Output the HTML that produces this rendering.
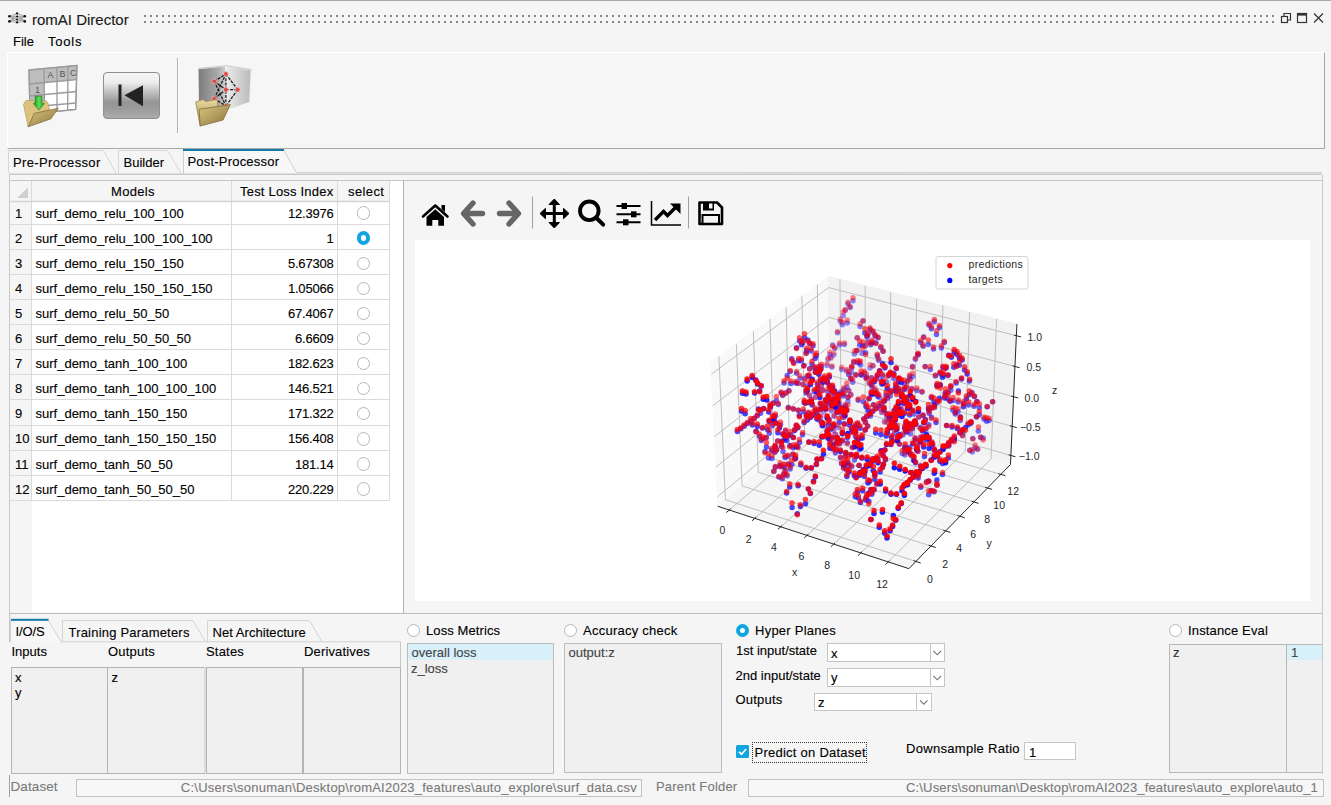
<!DOCTYPE html>
<html><head><meta charset="utf-8">
<style>
*{box-sizing:border-box;margin:0;padding:0}
html,body{width:1331px;height:805px;overflow:hidden;background:#f5f5f5;font-family:"Liberation Sans",sans-serif;font-size:13px;color:#000}
.t{-webkit-text-stroke:0.12px currentColor}
.a{position:absolute}
.t{position:absolute;white-space:nowrap;line-height:13px;font-size:13px}
.g{color:#777}
.hl{position:absolute;height:1px}
.vl{position:absolute;width:1px}
.radio{position:absolute;width:13.4px;height:13.4px;border-radius:50%;border:1.5px solid #b0b8c1;background:#fff}
.radio.on{border:4.4px solid #10a5e1;background:#fff}
.lb{position:absolute;background:#f0f0f0;border:1px solid #b4b4b4}
.cb{position:absolute;background:#fff;border:1px solid #c5c5c5}
.cbb{position:absolute;background:#fff;border:1px solid #c5c5c5}
</style></head><body>
<!-- top border -->
<div class="hl" style="left:0;top:0;width:1331px;background:#a8a8a8"></div>
<!-- title icon -->
<svg class="a" style="left:6px;top:11px" width="22" height="14" viewBox="6 11 22 14">
 <g stroke="#666" stroke-width="0.5" fill="none">
  <path d="M9.4 16.2 L17.1 13.3 M9.4 16.2 L17.1 16.5 M9.4 16.2 L17.1 19.5 M9.4 16.2 L17.1 22.5 M9.4 21.4 L17.1 13.3 M9.4 21.4 L17.1 16.5 M9.4 21.4 L17.1 19.5 M9.4 21.4 L17.1 22.5 M24.8 16.2 L17.1 13.3 M24.8 16.2 L17.1 16.5 M24.8 16.2 L17.1 19.5 M24.8 16.2 L17.1 22.5 M24.8 21.4 L17.1 13.3 M24.8 21.4 L17.1 16.5 M24.8 21.4 L17.1 19.5 M24.8 21.4 L17.1 22.5"/>
 </g>
 <g fill="#111"><circle cx="9.4" cy="16.2" r="1.3"/><circle cx="9.4" cy="21.4" r="1.3"/><circle cx="24.8" cy="16.2" r="1.3"/><circle cx="24.8" cy="21.4" r="1.3"/><circle cx="17.1" cy="13.4" r="1.1"/><circle cx="17.1" cy="16.5" r="1.1"/><circle cx="17.1" cy="19.5" r="1.1"/><circle cx="17.1" cy="22.4" r="1.1"/></g>
</svg>
<div class="t" style="left:32px;top:12px;font-size:15px;line-height:15px;color:#1a1a1a">romAI Director</div>
<!-- dotted grip -->
<div class="a" style="left:144px;top:15px;width:1134px;height:8px;background-image:linear-gradient(#858585,#858585),linear-gradient(#858585,#858585);background-size:6px 2px,6px 2px;background-repeat:repeat-x;background-position:0 0,0 6px;"></div>
<div class="a" style="left:144px;top:15px;width:1134px;height:8px;background-image:linear-gradient(90deg,#f5f5f5 0,#f5f5f5 0px,transparent 0px,transparent 2px,#f5f5f5 2px);background-size:6px 8px;"></div>
<!-- window buttons -->
<svg class="a" style="left:1279px;top:12px" width="46" height="12" viewBox="0 0 46 12">
 <g fill="none" stroke="#333" stroke-width="1.2">
  <rect x="2.5" y="4.5" width="6" height="6"/><path d="M5 4.5 V1.5 H11.5 V8 H8.5"/>
  <rect x="18.5" y="1.5" width="9" height="9"/><path d="M18.5 2.6 H27.5" stroke-width="2"/>
  <path d="M35 1.5 L44 10.5 M44 1.5 L35 10.5"/>
 </g>
</svg>
<!-- menu -->
<div class="t" style="left:13px;top:35px">File</div>
<div class="t" style="left:48px;top:35px;letter-spacing:0.8px">Tools</div>
<!-- toolbar box -->
<div class="a" style="left:7px;top:52px;width:1318px;height:97px;background:#f6f6f6;border-top:1px solid #fff;border-left:1px solid #fff;border-right:1px solid #a8a8a8;border-bottom:1px solid #a8a8a8"></div>
<!-- toolbar icon 1: spreadsheet -->
<svg class="a" style="left:20px;top:60px" width="62" height="72" viewBox="0 0 62 72">
 <defs>
  <linearGradient id="fold1" x1="0" y1="0" x2="0" y2="1"><stop offset="0" stop-color="#e9d9a0"/><stop offset="1" stop-color="#a08848"/></linearGradient>
  <linearGradient id="fold2" x1="0" y1="0" x2="1" y2="1"><stop offset="0" stop-color="#d9c584"/><stop offset="1" stop-color="#8d7538"/></linearGradient>
  <linearGradient id="grn" x1="0" y1="0" x2="1" y2="0"><stop offset="0" stop-color="#0a8a0a"/><stop offset="0.5" stop-color="#5de05d"/><stop offset="1" stop-color="#1a9a1a"/></linearGradient>
 </defs>
 <path d="M9 10 L57 5.5 L55.6 49.5 L10 54 Z" fill="#fff" stroke="#9a9a9a" stroke-width="1.2"/>
 <path d="M9 10 L57 5.5 L57 19 L9 24 Z" fill="#bdbdbd"/>
 <path d="M9 10 L24 8.6 L24.5 54 L10 54 Z" fill="#bdbdbd"/>
 <g stroke="#9a9a9a" stroke-width="1.3" fill="none">
  <path d="M9 10 L57 5.5 L55.6 49.5 L10 54 Z"/>
  <path d="M9 24 L57 19.5 M9.5 36 L56.5 31.5 M9.8 47 L56 43"/>
  <path d="M24 8.6 L24.5 53 M37 7.4 L37 52 M48 6.3 L47.6 51"/>
 </g>
 <g fill="#555" font-family="Liberation Sans" font-size="9"><text x="27.5" y="18">A</text><text x="39.5" y="17">B</text><text x="50" y="16">C</text><text x="15" y="33">1</text></g>
 <path d="M3.5 44.4 L6 40.5 L13 40.3 L15 42 L26 40.8 L28 43 L29.5 50 L14.4 53.4 L8.2 66.8 Z" fill="#dcc27e" stroke="#b39a5a" stroke-width="0.7"/>
 <path d="M15.2 36.2 H21.9 V43.4 H24.4 L18.9 50.1 L13.4 43.4 H15.2 Z" fill="url(#grn)" stroke="#0d7a0d" stroke-width="0.6"/>
 <path d="M14.4 53.4 L38.3 48.2 L30.8 58.9 L8.2 66.8 Z" fill="url(#fold2)" stroke="#7f6a35" stroke-width="0.7"/>
</svg>
<!-- toolbar icon 2: button -->
<div class="a" style="left:102.5px;top:71.5px;width:57px;height:47.5px;border:1px solid #8e8e8e;border-radius:4px;background:linear-gradient(#f6f6f6 0%,#eeeeee 20%,#bcbcbc 45%,#959595 65%,#9c9c9c 80%,#acacac 100%)"></div>
<svg class="a" style="left:102px;top:72px" width="58" height="48" viewBox="0 0 58 48">
 <rect x="16.5" y="12.5" width="3" height="21.5" fill="#222"/>
 <path d="M22.5 23.3 L41 13.3 L41 34.2 Z" fill="#222"/>
</svg>
<!-- separator -->
<div class="vl" style="left:177px;top:58px;height:75px;background:#b0b0b0"></div>
<div class="vl" style="left:178px;top:58px;height:75px;background:#fff"></div>
<!-- toolbar icon 3: cube -->
<svg class="a" style="left:190px;top:58px" width="70" height="72" viewBox="0 0 70 72">
 <defs>
  <linearGradient id="cubeL" x1="0" y1="0" x2="1" y2="0"><stop offset="0" stop-color="#7c7c7c"/><stop offset="0.7" stop-color="#a9a9a9"/><stop offset="1" stop-color="#d0d0d0"/></linearGradient>
  <linearGradient id="cubeR" x1="0" y1="0" x2="1" y2="0"><stop offset="0" stop-color="#ececec"/><stop offset="1" stop-color="#b9b9b9"/></linearGradient>
 </defs>
 <path d="M8.5 10.5 L35.9 7.7 L35.9 53 L9 46 Z" fill="url(#cubeL)"/>
 <path d="M35.9 7.7 L61.7 11.6 L60 44.6 L35.9 53 Z" fill="url(#cubeR)"/>
 <path d="M8.5 10.5 L35.9 7.7 L61.7 11.6 M35.9 8 V53 M61.5 11.6 L60 44.6 L35.9 53" fill="none" stroke="#f4f4f4" stroke-width="1.6"/>
 <path d="M8.5 10.5 L35.9 7.7 L61.7 11.6" fill="none" stroke="#bdbdbd" stroke-width="0.8"/>
 <g stroke="#1a1a1a" stroke-width="1.3" fill="none" stroke-dasharray="3 1.2">
  <path d="M24.2 23.3 L35.9 16 M35.9 16 L35.9 47.9 M35.9 31.7 L47.7 31.7 M35.9 16 L47.7 31.7 M47.7 31.7 L35.9 47.9 M24.2 23.3 L35.9 47.9 M24.2 23.3 L35.9 31.7 M24.2 40.7 L35.9 16 M24.2 40.7 L35.9 31.7 M24.2 40.7 L35.9 47.9"/>
 </g>
 <g fill="#e04848" stroke="#f6d0d0" stroke-width="0.6"><circle cx="35.9" cy="16" r="2.4"/><circle cx="24.2" cy="23.3" r="2.4"/><circle cx="35.9" cy="31.7" r="2.4"/><circle cx="47.7" cy="31.7" r="2.4"/><circle cx="24.2" cy="40.7" r="2.4"/><circle cx="35.9" cy="47.9" r="2.4"/></g>
 <path d="M5.7 44 L13 41.5 L15.5 43.5 L27 41.5 L29 54 L10.2 68 Z" fill="url(#fold1)" stroke="#9b8245" stroke-width="0.8"/>
 <path d="M9.1 51.3 L40.4 46.5 L33 62 L10.2 68 Z" fill="url(#fold2)" stroke="#7f6a35" stroke-width="0.8"/>
</svg>
<!-- top tabs -->
<svg class="a" style="left:0;top:140px" width="1331" height="45" viewBox="0 140 1331 45">
 <path d="M8.5 173 V150.5 H103.5 L116 173" fill="#f5f5f5" stroke="#d6d6d6" stroke-width="1"/>
 <path d="M118.5 173 V150.5 H167.5 L181 173" fill="#f5f5f5" stroke="#d6d6d6" stroke-width="1"/>
 <path d="M183.5 174 V150 H283.5 L296.5 172.5 H1322" fill="#f7f7f7" stroke="#d0d0d0" stroke-width="1"/>
 <rect x="183" y="149" width="101" height="2" fill="#117aa6"/>
 <rect x="9" y="173.5" width="1313" height="1.5" fill="#c9c9c9"/>
</svg>
<div class="t" style="left:13px;top:156px;letter-spacing:0.35px">Pre-Processor</div>
<div class="t" style="left:123.5px;top:156px">Builder</div>
<div class="t" style="left:187.5px;top:155px;letter-spacing:0.2px">Post-Processor</div>
<!-- main frame -->
<div class="a" style="left:9px;top:175px;width:1314px;height:439px;border-left:1px solid #c8c8c8;border-right:1px solid #c8c8c8;border-bottom:1.5px solid #bdbdbd"></div>
<div class="hl" style="left:9px;top:180px;width:1313px;background:#c6c6c6"></div>
<!-- table -->
<div class="a" style="left:10px;top:181px;width:393px;height:431px;background:#fff"></div>
<div class="a" style="left:10px;top:181px;width:22px;height:431px;background:#f5f5f5"></div>
<div class="a" style="left:10px;top:181px;width:380px;height:21px;background:#f5f5f5"></div>
<div class="vl" style="left:402.5px;top:180px;height:433px;width:1.5px;background:#b2b2b2"></div>
<svg class="a" style="left:0;top:180px" width="404" height="330" viewBox="0 180 404 330">
 <g stroke="#dadada" stroke-width="1" fill="none">
  <path d="M31.5 181 V501 M231.5 181 V501 M337.5 181 V501 M389.5 181 V501"/>
  <path d="M10 201.5 H390" stroke-width="1.6" stroke="#d4d4d4"/>
  <path d="M10 224.5 H390 M10 249.5 H390 M10 274.5 H390 M10 299.5 H390 M10 324.5 H390 M10 349.5 H390 M10 374.5 H390 M10 399.5 H390 M10 425.5 H390 M10 450.5 H390 M10 475.5 H390 M10 500.5 H390"/>
 </g>
 <path d="M17 198 L28 187.5 L28 198 Z" fill="#cfcfcf"/>
</svg>
<div class="t" style="left:111px;top:185px;letter-spacing:0.3px">Models</div>
<div class="t" style="left:240px;top:185px;letter-spacing:0.2px">Test Loss Index</div>
<div class="t" style="left:348px;top:185px;letter-spacing:0.4px">select</div>
<div class="t" style="left:15px;top:206.5px">1</div>
<div class="t" style="left:35.5px;top:206.5px">surf_demo_relu_100_100</div>
<div class="t" style="left:233px;top:206.5px;width:100.5px;text-align:right;letter-spacing:-0.2px">12.3976</div>
<div class="radio" style="left:356.5px;top:206.3px"></div>
<div class="t" style="left:15px;top:231.6px">2</div>
<div class="t" style="left:35.5px;top:231.6px">surf_demo_relu_100_100_100</div>
<div class="t" style="left:233px;top:231.6px;width:100.5px;text-align:right;letter-spacing:-0.2px">1</div>
<div class="radio on" style="left:356.5px;top:231.4px"></div>
<div class="t" style="left:15px;top:256.7px">3</div>
<div class="t" style="left:35.5px;top:256.7px">surf_demo_relu_150_150</div>
<div class="t" style="left:233px;top:256.7px;width:100.5px;text-align:right;letter-spacing:-0.2px">5.67308</div>
<div class="radio" style="left:356.5px;top:256.5px"></div>
<div class="t" style="left:15px;top:281.8px">4</div>
<div class="t" style="left:35.5px;top:281.8px">surf_demo_relu_150_150_150</div>
<div class="t" style="left:233px;top:281.8px;width:100.5px;text-align:right;letter-spacing:-0.2px">1.05066</div>
<div class="radio" style="left:356.5px;top:281.6px"></div>
<div class="t" style="left:15px;top:306.9px">5</div>
<div class="t" style="left:35.5px;top:306.9px">surf_demo_relu_50_50</div>
<div class="t" style="left:233px;top:306.9px;width:100.5px;text-align:right;letter-spacing:-0.2px">67.4067</div>
<div class="radio" style="left:356.5px;top:306.7px"></div>
<div class="t" style="left:15px;top:332.0px">6</div>
<div class="t" style="left:35.5px;top:332.0px">surf_demo_relu_50_50_50</div>
<div class="t" style="left:233px;top:332.0px;width:100.5px;text-align:right;letter-spacing:-0.2px">6.6609</div>
<div class="radio" style="left:356.5px;top:331.8px"></div>
<div class="t" style="left:15px;top:357.1px">7</div>
<div class="t" style="left:35.5px;top:357.1px">surf_demo_tanh_100_100</div>
<div class="t" style="left:233px;top:357.1px;width:100.5px;text-align:right;letter-spacing:-0.2px">182.623</div>
<div class="radio" style="left:356.5px;top:356.9px"></div>
<div class="t" style="left:15px;top:382.2px">8</div>
<div class="t" style="left:35.5px;top:382.2px">surf_demo_tanh_100_100_100</div>
<div class="t" style="left:233px;top:382.2px;width:100.5px;text-align:right;letter-spacing:-0.2px">146.521</div>
<div class="radio" style="left:356.5px;top:382.0px"></div>
<div class="t" style="left:15px;top:407.3px">9</div>
<div class="t" style="left:35.5px;top:407.3px">surf_demo_tanh_150_150</div>
<div class="t" style="left:233px;top:407.3px;width:100.5px;text-align:right;letter-spacing:-0.2px">171.322</div>
<div class="radio" style="left:356.5px;top:407.1px"></div>
<div class="t" style="left:15px;top:432.4px">10</div>
<div class="t" style="left:35.5px;top:432.4px">surf_demo_tanh_150_150_150</div>
<div class="t" style="left:233px;top:432.4px;width:100.5px;text-align:right;letter-spacing:-0.2px">156.408</div>
<div class="radio" style="left:356.5px;top:432.2px"></div>
<div class="t" style="left:15px;top:457.5px">11</div>
<div class="t" style="left:35.5px;top:457.5px">surf_demo_tanh_50_50</div>
<div class="t" style="left:233px;top:457.5px;width:100.5px;text-align:right;letter-spacing:-0.2px">181.14</div>
<div class="radio" style="left:356.5px;top:457.3px"></div>
<div class="t" style="left:15px;top:482.6px">12</div>
<div class="t" style="left:35.5px;top:482.6px">surf_demo_tanh_50_50_50</div>
<div class="t" style="left:233px;top:482.6px;width:100.5px;text-align:right;letter-spacing:-0.2px">220.229</div>
<div class="radio" style="left:356.5px;top:482.4px"></div>
<!-- plot toolbar -->
<svg class="a" style="left:410px;top:190px" width="330" height="45" viewBox="410 190 330 45">
 <!-- home -->
 <path d="M423 216.5 L435.3 205.5 L447.5 216.5" fill="none" stroke="#000" stroke-width="2.6" stroke-linecap="round" stroke-linejoin="round"/>
 <path d="M441.5 205 H445 V212 L441.5 209 Z" fill="#000"/>
 <path d="M426.5 217 L435.3 209.3 L444 217 V225.8 H438.3 V220 H432.3 V225.8 H426.5 Z" fill="#000"/>
 <!-- back -->
 <path d="M473 203 L463.5 213.5 L473 224 M464.5 213.5 H482.5" fill="none" stroke="#666" stroke-width="5.4" stroke-linecap="round" stroke-linejoin="round"/>
 <!-- forward -->
 <path d="M509 203 L518.5 213.5 L509 224 M517.5 213.5 H499.5" fill="none" stroke="#666" stroke-width="5.4" stroke-linecap="round" stroke-linejoin="round"/>
 <rect x="532" y="196.5" width="1" height="32" fill="#a0a0a0"/>
 <!-- move -->
 <path d="M554.3 203 V225 M543 213.5 H566" stroke="#000" stroke-width="3" fill="none"/>
 <path d="M554.3 199 L559.5 204.5 H549 Z M554.3 228 L559.5 222.5 H549 Z M540 213.5 L545.5 208.3 V218.7 Z M569 213.5 L563.5 208.3 V218.7 Z" fill="#000" stroke="#000" stroke-width="1" stroke-linejoin="round"/>
 <!-- zoom -->
 <circle cx="589.3" cy="210.8" r="9.3" fill="none" stroke="#000" stroke-width="3.9"/>
 <path d="M596.5 218 L603.2 224.7" stroke="#000" stroke-width="4" stroke-linecap="round"/>
 <!-- sliders -->
 <path d="M616.5 206 H640.5 M616.5 214.3 H640.5 M616.5 222.3 H640.5" stroke="#000" stroke-width="2.1"/>
 <rect x="621.5" y="203" width="5.5" height="6" fill="#000"/>
 <rect x="631" y="211.3" width="5.5" height="6" fill="#000"/>
 <rect x="623" y="219.3" width="5.5" height="6" fill="#000"/>
 <!-- chart -->
 <path d="M651.5 201 V225 H681" fill="none" stroke="#000" stroke-width="1.5"/>
 <path d="M655 220 L663.5 211.5 L667.5 215.5 L677 206" fill="none" stroke="#000" stroke-width="3.4" stroke-linejoin="miter"/>
 <path d="M670 203.5 H680.5 V214 Z" fill="#000"/>
 <rect x="688" y="196.5" width="1" height="32" fill="#a0a0a0"/>
 <!-- save -->
 <path d="M699.5 202.5 H717 L722 207.5 V224 H699.5 Z" fill="none" stroke="#000" stroke-width="2.6" stroke-linejoin="round"/>
 <rect x="703" y="202" width="11" height="8.5" fill="#000"/>
 <rect x="709" y="203.5" width="3.5" height="5" fill="#f5f5f5"/>
 <rect x="702.5" y="215" width="16.5" height="9" fill="none" stroke="#000" stroke-width="2"/>
</svg>
<!-- canvas -->
<div class="a" style="left:415px;top:240px;width:895px;height:361px;background:#fff"></div>
<svg class="a" style="left:415px;top:240px" width="895" height="361" viewBox="415 240 895 361"><g font-family="Liberation Sans" font-size="10.5" fill="#262626"><polygon points="717.68,506.25 830.09,412.11 828.53,276.34 710.74,362.22" fill="#f9f9f9" stroke="#f9f9f9" stroke-width="1"/>
<polygon points="830.09,412.11 1010.46,464.49 1016.90,324.05 828.53,276.34" fill="#f2f2f2" stroke="#f2f2f2" stroke-width="1"/>
<polygon points="717.68,506.25 908.89,568.65 1010.46,464.49 830.09,412.11" fill="#f5f5f5" stroke="#f5f5f5" stroke-width="1"/>
<line x1="729.26" y1="510.03" x2="841.06" y2="415.30" stroke="#bcbcbc" stroke-width="0.95"/>
<line x1="841.06" y1="415.30" x2="839.96" y2="279.24" stroke="#bcbcbc" stroke-width="0.95"/>
<line x1="725.43" y1="499.76" x2="915.92" y2="561.44" stroke="#bcbcbc" stroke-width="0.95"/>
<line x1="725.43" y1="499.76" x2="718.88" y2="356.28" stroke="#bcbcbc" stroke-width="0.95"/>
<line x1="754.80" y1="518.37" x2="865.23" y2="422.32" stroke="#bcbcbc" stroke-width="0.95"/>
<line x1="865.23" y1="422.32" x2="865.17" y2="285.62" stroke="#bcbcbc" stroke-width="0.95"/>
<line x1="742.03" y1="485.86" x2="930.97" y2="546.00" stroke="#bcbcbc" stroke-width="0.95"/>
<line x1="742.03" y1="485.86" x2="736.33" y2="343.56" stroke="#bcbcbc" stroke-width="0.95"/>
<line x1="780.72" y1="526.82" x2="889.73" y2="429.43" stroke="#bcbcbc" stroke-width="0.95"/>
<line x1="889.73" y1="429.43" x2="890.73" y2="292.09" stroke="#bcbcbc" stroke-width="0.95"/>
<line x1="758.24" y1="472.28" x2="945.64" y2="530.96" stroke="#bcbcbc" stroke-width="0.95"/>
<line x1="758.24" y1="472.28" x2="753.35" y2="331.16" stroke="#bcbcbc" stroke-width="0.95"/>
<line x1="807.01" y1="535.40" x2="914.56" y2="436.64" stroke="#bcbcbc" stroke-width="0.95"/>
<line x1="914.56" y1="436.64" x2="916.64" y2="298.66" stroke="#bcbcbc" stroke-width="0.95"/>
<line x1="774.07" y1="459.03" x2="959.95" y2="516.28" stroke="#bcbcbc" stroke-width="0.95"/>
<line x1="774.07" y1="459.03" x2="769.94" y2="319.06" stroke="#bcbcbc" stroke-width="0.95"/>
<line x1="833.69" y1="544.11" x2="939.72" y2="443.95" stroke="#bcbcbc" stroke-width="0.95"/>
<line x1="939.72" y1="443.95" x2="942.92" y2="305.31" stroke="#bcbcbc" stroke-width="0.95"/>
<line x1="789.52" y1="446.08" x2="973.91" y2="501.97" stroke="#bcbcbc" stroke-width="0.95"/>
<line x1="789.52" y1="446.08" x2="786.12" y2="307.26" stroke="#bcbcbc" stroke-width="0.95"/>
<line x1="860.77" y1="552.94" x2="965.22" y2="451.35" stroke="#bcbcbc" stroke-width="0.95"/>
<line x1="965.22" y1="451.35" x2="969.57" y2="312.06" stroke="#bcbcbc" stroke-width="0.95"/>
<line x1="804.62" y1="433.44" x2="987.53" y2="488.01" stroke="#bcbcbc" stroke-width="0.95"/>
<line x1="804.62" y1="433.44" x2="801.92" y2="295.74" stroke="#bcbcbc" stroke-width="0.95"/>
<line x1="888.25" y1="561.91" x2="991.07" y2="458.86" stroke="#bcbcbc" stroke-width="0.95"/>
<line x1="991.07" y1="458.86" x2="996.61" y2="318.91" stroke="#bcbcbc" stroke-width="0.95"/>
<line x1="819.37" y1="421.09" x2="1000.82" y2="474.38" stroke="#bcbcbc" stroke-width="0.95"/>
<line x1="819.37" y1="421.09" x2="817.33" y2="284.50" stroke="#bcbcbc" stroke-width="0.95"/>
<line x1="717.24" y1="497.01" x2="829.99" y2="403.37" stroke="#bcbcbc" stroke-width="0.95"/>
<line x1="829.99" y1="403.37" x2="1010.88" y2="455.47" stroke="#bcbcbc" stroke-width="0.95"/>
<line x1="715.80" y1="467.19" x2="829.66" y2="375.19" stroke="#bcbcbc" stroke-width="0.95"/>
<line x1="829.66" y1="375.19" x2="1012.21" y2="426.36" stroke="#bcbcbc" stroke-width="0.95"/>
<line x1="714.33" y1="436.80" x2="829.33" y2="346.51" stroke="#bcbcbc" stroke-width="0.95"/>
<line x1="829.33" y1="346.51" x2="1013.57" y2="396.71" stroke="#bcbcbc" stroke-width="0.95"/>
<line x1="712.84" y1="405.80" x2="829.00" y2="317.31" stroke="#bcbcbc" stroke-width="0.95"/>
<line x1="829.00" y1="317.31" x2="1014.96" y2="366.49" stroke="#bcbcbc" stroke-width="0.95"/>
<line x1="711.32" y1="374.20" x2="828.66" y2="287.59" stroke="#bcbcbc" stroke-width="0.95"/>
<line x1="828.66" y1="287.59" x2="1016.37" y2="335.71" stroke="#bcbcbc" stroke-width="0.95"/>
<line x1="717.68" y1="506.25" x2="908.89" y2="568.65" stroke="#262626" stroke-width="1.0"/>
<line x1="908.89" y1="568.65" x2="1010.46" y2="464.49" stroke="#262626" stroke-width="1.0"/>
<line x1="1010.46" y1="464.49" x2="1016.90" y2="324.05" stroke="#262626" stroke-width="1.0"/>
<line x1="730.72" y1="508.79" x2="726.33" y2="512.51" stroke="#262626" stroke-width="1.0"/>
<line x1="913.51" y1="560.66" x2="920.74" y2="563.00" stroke="#262626" stroke-width="1.0"/>
<line x1="756.25" y1="517.11" x2="751.91" y2="520.88" stroke="#262626" stroke-width="1.0"/>
<line x1="928.58" y1="545.24" x2="935.75" y2="547.52" stroke="#262626" stroke-width="1.0"/>
<line x1="782.14" y1="525.55" x2="777.86" y2="529.38" stroke="#262626" stroke-width="1.0"/>
<line x1="943.28" y1="530.21" x2="950.38" y2="532.44" stroke="#262626" stroke-width="1.0"/>
<line x1="808.42" y1="534.11" x2="804.19" y2="537.99" stroke="#262626" stroke-width="1.0"/>
<line x1="957.61" y1="515.56" x2="964.65" y2="517.73" stroke="#262626" stroke-width="1.0"/>
<line x1="835.08" y1="542.80" x2="830.91" y2="546.74" stroke="#262626" stroke-width="1.0"/>
<line x1="971.59" y1="501.27" x2="978.57" y2="503.39" stroke="#262626" stroke-width="1.0"/>
<line x1="862.13" y1="551.61" x2="858.02" y2="555.61" stroke="#262626" stroke-width="1.0"/>
<line x1="985.22" y1="487.32" x2="992.14" y2="489.39" stroke="#262626" stroke-width="1.0"/>
<line x1="889.60" y1="560.56" x2="885.54" y2="564.62" stroke="#262626" stroke-width="1.0"/>
<line x1="998.53" y1="473.71" x2="1005.39" y2="475.73" stroke="#262626" stroke-width="1.0"/>
<line x1="1008.60" y1="454.81" x2="1015.44" y2="456.78" stroke="#262626" stroke-width="1.0"/>
<line x1="1009.91" y1="425.72" x2="1016.82" y2="427.65" stroke="#262626" stroke-width="1.0"/>
<line x1="1011.25" y1="396.07" x2="1018.22" y2="397.97" stroke="#262626" stroke-width="1.0"/>
<line x1="1012.61" y1="365.87" x2="1019.65" y2="367.74" stroke="#262626" stroke-width="1.0"/>
<line x1="1014.00" y1="335.10" x2="1021.11" y2="336.92" stroke="#262626" stroke-width="1.0"/>
<text x="722.5" y="534.3" text-anchor="middle">0</text>
<text x="748.7" y="543.3" text-anchor="middle">2</text>
<text x="773.9" y="551.4" text-anchor="middle">4</text>
<text x="801.3" y="560.4" text-anchor="middle">6</text>
<text x="827.1" y="569.4" text-anchor="middle">8</text>
<text x="854.2" y="578.5" text-anchor="middle">10</text>
<text x="882.1" y="587.5" text-anchor="middle">12</text>
<text x="794.7" y="575.8" text-anchor="middle">x</text>
<text x="929.9" y="583.3" text-anchor="middle">0</text>
<text x="945.2" y="568.4" text-anchor="middle">2</text>
<text x="959.2" y="552.2" text-anchor="middle">4</text>
<text x="973.2" y="537.6" text-anchor="middle">6</text>
<text x="987.1" y="522.7" text-anchor="middle">8</text>
<text x="999.2" y="508.8" text-anchor="middle">10</text>
<text x="1013.2" y="494.8" text-anchor="middle">12</text>
<text x="989.0" y="547.0" text-anchor="middle">y</text>
<text x="1034.8" y="340.7" text-anchor="middle">1.0</text>
<text x="1033.7" y="371.4" text-anchor="middle">0.5</text>
<text x="1031.9" y="402.2" text-anchor="middle">0.0</text>
<text x="1030.3" y="431.3" text-anchor="middle">−0.5</text>
<text x="1029.2" y="460.4" text-anchor="middle">−1.0</text>
<text x="1054.5" y="394.4" text-anchor="middle">z</text>
<g fill="#0000ff">
<circle cx="742.5" cy="393.2" r="2.75" fill-opacity="0.82"/>
<circle cx="747.2" cy="381.0" r="2.75" fill-opacity="0.85"/>
<circle cx="752.2" cy="377.6" r="2.75" fill-opacity="0.87"/>
<circle cx="757.6" cy="384.0" r="2.75" fill-opacity="0.87"/>
<circle cx="763.3" cy="399.3" r="2.75" fill-opacity="0.85"/>
<circle cx="769.2" cy="421.3" r="2.75" fill-opacity="0.83"/>
<circle cx="775.1" cy="446.6" r="2.75" fill-opacity="0.79"/>
<circle cx="786.6" cy="493.0" r="2.75" fill-opacity="0.74"/>
<circle cx="792.1" cy="507.6" r="2.75" fill-opacity="0.72"/>
<circle cx="797.3" cy="513.8" r="2.75" fill-opacity="0.72"/>
<circle cx="817.1" cy="459.4" r="2.75" fill-opacity="0.86"/>
<circle cx="822.0" cy="437.0" r="2.75" fill-opacity="0.90"/>
<circle cx="827.2" cy="418.0" r="2.75" fill-opacity="0.95"/>
<circle cx="832.4" cy="405.6" r="2.75" fill-opacity="0.98"/>
<circle cx="837.8" cy="402.2" r="2.75" fill-opacity="0.99"/>
<circle cx="843.4" cy="408.7" r="2.75" fill-opacity="0.99"/>
<circle cx="854.5" cy="446.7" r="2.75" fill-opacity="0.95"/>
<circle cx="860.0" cy="472.5" r="2.75" fill-opacity="0.92"/>
<circle cx="870.9" cy="519.6" r="2.75" fill-opacity="0.86"/>
<circle cx="887.0" cy="538.0" r="2.75" fill-opacity="0.86"/>
<circle cx="892.6" cy="526.5" r="2.75" fill-opacity="0.89"/>
<circle cx="898.2" cy="508.2" r="2.75" fill-opacity="0.93"/>
<circle cx="904.0" cy="485.9" r="2.75" fill-opacity="0.98"/>
<circle cx="737.4" cy="431.5" r="2.75" fill-opacity="0.72"/>
<circle cx="741.6" cy="411.2" r="2.75" fill-opacity="0.77"/>
<circle cx="746.0" cy="394.0" r="2.75" fill-opacity="0.80"/>
<circle cx="755.8" cy="379.9" r="2.75" fill-opacity="0.85"/>
<circle cx="761.2" cy="385.9" r="2.75" fill-opacity="0.85"/>
<circle cx="766.8" cy="400.1" r="2.75" fill-opacity="0.83"/>
<circle cx="772.6" cy="420.4" r="2.75" fill-opacity="0.81"/>
<circle cx="784.1" cy="467.2" r="2.75" fill-opacity="0.75"/>
<circle cx="789.7" cy="486.9" r="2.75" fill-opacity="0.73"/>
<circle cx="800.4" cy="506.4" r="2.75" fill-opacity="0.72"/>
<circle cx="805.5" cy="503.8" r="2.75" fill-opacity="0.73"/>
<circle cx="810.4" cy="493.4" r="2.75" fill-opacity="0.76"/>
<circle cx="815.4" cy="476.8" r="2.75" fill-opacity="0.80"/>
<circle cx="825.3" cy="436.1" r="2.75" fill-opacity="0.89"/>
<circle cx="835.7" cy="407.4" r="2.75" fill-opacity="0.96"/>
<circle cx="846.6" cy="410.5" r="2.75" fill-opacity="0.97"/>
<circle cx="857.7" cy="445.7" r="2.75" fill-opacity="0.93"/>
<circle cx="863.2" cy="469.7" r="2.75" fill-opacity="0.90"/>
<circle cx="868.6" cy="493.3" r="2.75" fill-opacity="0.87"/>
<circle cx="874.0" cy="513.4" r="2.75" fill-opacity="0.85"/>
<circle cx="879.3" cy="527.3" r="2.75" fill-opacity="0.84"/>
<circle cx="884.7" cy="533.3" r="2.75" fill-opacity="0.84"/>
<circle cx="890.1" cy="530.7" r="2.75" fill-opacity="0.85"/>
<circle cx="895.7" cy="520.2" r="2.75" fill-opacity="0.88"/>
<circle cx="901.3" cy="503.4" r="2.75" fill-opacity="0.92"/>
<circle cx="907.1" cy="483.0" r="2.75" fill-opacity="0.97"/>
<circle cx="740.8" cy="428.8" r="2.75" fill-opacity="0.71"/>
<circle cx="745.2" cy="413.7" r="2.75" fill-opacity="0.74"/>
<circle cx="754.6" cy="392.9" r="2.75" fill-opacity="0.80"/>
<circle cx="759.6" cy="391.0" r="2.75" fill-opacity="0.81"/>
<circle cx="770.4" cy="407.1" r="2.75" fill-opacity="0.80"/>
<circle cx="776.0" cy="422.9" r="2.75" fill-opacity="0.79"/>
<circle cx="781.6" cy="441.2" r="2.75" fill-opacity="0.77"/>
<circle cx="798.1" cy="485.7" r="2.75" fill-opacity="0.73"/>
<circle cx="808.4" cy="489.0" r="2.75" fill-opacity="0.74"/>
<circle cx="813.5" cy="481.3" r="2.75" fill-opacity="0.76"/>
<circle cx="823.5" cy="453.9" r="2.75" fill-opacity="0.83"/>
<circle cx="828.6" cy="438.6" r="2.75" fill-opacity="0.86"/>
<circle cx="833.8" cy="425.7" r="2.75" fill-opacity="0.90"/>
<circle cx="844.5" cy="415.6" r="2.75" fill-opacity="0.93"/>
<circle cx="849.9" cy="420.7" r="2.75" fill-opacity="0.94"/>
<circle cx="855.4" cy="432.0" r="2.75" fill-opacity="0.93"/>
<circle cx="860.9" cy="448.2" r="2.75" fill-opacity="0.91"/>
<circle cx="866.3" cy="466.8" r="2.75" fill-opacity="0.89"/>
<circle cx="882.4" cy="512.2" r="2.75" fill-opacity="0.85"/>
<circle cx="893.3" cy="515.5" r="2.75" fill-opacity="0.86"/>
<circle cx="904.4" cy="495.3" r="2.75" fill-opacity="0.92"/>
<circle cx="910.2" cy="480.1" r="2.75" fill-opacity="0.95"/>
<circle cx="744.1" cy="426.2" r="2.75" fill-opacity="0.70"/>
<circle cx="758.5" cy="409.0" r="2.75" fill-opacity="0.75"/>
<circle cx="763.6" cy="408.7" r="2.75" fill-opacity="0.76"/>
<circle cx="768.8" cy="412.0" r="2.75" fill-opacity="0.77"/>
<circle cx="774.1" cy="418.7" r="2.75" fill-opacity="0.77"/>
<circle cx="779.5" cy="427.9" r="2.75" fill-opacity="0.76"/>
<circle cx="784.9" cy="438.5" r="2.75" fill-opacity="0.76"/>
<circle cx="795.6" cy="458.2" r="2.75" fill-opacity="0.74"/>
<circle cx="800.9" cy="464.8" r="2.75" fill-opacity="0.74"/>
<circle cx="806.1" cy="468.2" r="2.75" fill-opacity="0.75"/>
<circle cx="811.3" cy="468.0" r="2.75" fill-opacity="0.76"/>
<circle cx="816.4" cy="464.5" r="2.75" fill-opacity="0.77"/>
<circle cx="821.5" cy="458.5" r="2.75" fill-opacity="0.79"/>
<circle cx="837.1" cy="437.4" r="2.75" fill-opacity="0.86"/>
<circle cx="842.4" cy="433.8" r="2.75" fill-opacity="0.88"/>
<circle cx="847.8" cy="433.5" r="2.75" fill-opacity="0.89"/>
<circle cx="858.6" cy="443.8" r="2.75" fill-opacity="0.89"/>
<circle cx="869.4" cy="464.0" r="2.75" fill-opacity="0.88"/>
<circle cx="874.8" cy="474.7" r="2.75" fill-opacity="0.87"/>
<circle cx="880.2" cy="484.1" r="2.75" fill-opacity="0.86"/>
<circle cx="885.6" cy="490.9" r="2.75" fill-opacity="0.86"/>
<circle cx="891.0" cy="494.3" r="2.75" fill-opacity="0.87"/>
<circle cx="896.5" cy="494.2" r="2.75" fill-opacity="0.88"/>
<circle cx="902.0" cy="490.7" r="2.75" fill-opacity="0.89"/>
<circle cx="907.6" cy="484.7" r="2.75" fill-opacity="0.92"/>
<circle cx="913.2" cy="477.2" r="2.75" fill-opacity="0.94"/>
<circle cx="747.4" cy="423.6" r="2.75" fill-opacity="0.69"/>
<circle cx="752.4" cy="425.1" r="2.75" fill-opacity="0.69"/>
<circle cx="757.5" cy="426.6" r="2.75" fill-opacity="0.70"/>
<circle cx="762.6" cy="428.1" r="2.75" fill-opacity="0.71"/>
<circle cx="767.7" cy="429.7" r="2.75" fill-opacity="0.71"/>
<circle cx="777.9" cy="432.7" r="2.75" fill-opacity="0.73"/>
<circle cx="783.0" cy="434.3" r="2.75" fill-opacity="0.74"/>
<circle cx="788.2" cy="435.8" r="2.75" fill-opacity="0.74"/>
<circle cx="793.3" cy="437.4" r="2.75" fill-opacity="0.75"/>
<circle cx="808.9" cy="442.0" r="2.75" fill-opacity="0.77"/>
<circle cx="814.1" cy="443.6" r="2.75" fill-opacity="0.78"/>
<circle cx="819.3" cy="445.2" r="2.75" fill-opacity="0.79"/>
<circle cx="829.9" cy="448.3" r="2.75" fill-opacity="0.80"/>
<circle cx="840.4" cy="451.5" r="2.75" fill-opacity="0.82"/>
<circle cx="845.8" cy="453.1" r="2.75" fill-opacity="0.83"/>
<circle cx="851.1" cy="454.7" r="2.75" fill-opacity="0.83"/>
<circle cx="856.4" cy="456.3" r="2.75" fill-opacity="0.84"/>
<circle cx="861.8" cy="457.9" r="2.75" fill-opacity="0.85"/>
<circle cx="867.2" cy="459.5" r="2.75" fill-opacity="0.86"/>
<circle cx="872.6" cy="461.2" r="2.75" fill-opacity="0.86"/>
<circle cx="878.0" cy="462.8" r="2.75" fill-opacity="0.87"/>
<circle cx="883.4" cy="464.4" r="2.75" fill-opacity="0.88"/>
<circle cx="894.3" cy="467.7" r="2.75" fill-opacity="0.89"/>
<circle cx="899.7" cy="469.3" r="2.75" fill-opacity="0.90"/>
<circle cx="905.2" cy="471.0" r="2.75" fill-opacity="0.91"/>
<circle cx="910.7" cy="472.6" r="2.75" fill-opacity="0.92"/>
<circle cx="916.3" cy="474.3" r="2.75" fill-opacity="0.93"/>
<circle cx="750.7" cy="421.0" r="2.75" fill-opacity="0.67"/>
<circle cx="756.0" cy="431.3" r="2.75" fill-opacity="0.67"/>
<circle cx="761.3" cy="440.4" r="2.75" fill-opacity="0.66"/>
<circle cx="766.5" cy="446.9" r="2.75" fill-opacity="0.66"/>
<circle cx="771.6" cy="450.2" r="2.75" fill-opacity="0.66"/>
<circle cx="776.6" cy="450.0" r="2.75" fill-opacity="0.67"/>
<circle cx="781.6" cy="446.5" r="2.75" fill-opacity="0.69"/>
<circle cx="786.5" cy="440.5" r="2.75" fill-opacity="0.71"/>
<circle cx="796.3" cy="425.7" r="2.75" fill-opacity="0.75"/>
<circle cx="806.5" cy="415.9" r="2.75" fill-opacity="0.79"/>
<circle cx="811.7" cy="415.6" r="2.75" fill-opacity="0.80"/>
<circle cx="817.0" cy="419.0" r="2.75" fill-opacity="0.80"/>
<circle cx="822.3" cy="425.7" r="2.75" fill-opacity="0.80"/>
<circle cx="827.7" cy="435.0" r="2.75" fill-opacity="0.80"/>
<circle cx="833.0" cy="445.6" r="2.75" fill-opacity="0.79"/>
<circle cx="843.7" cy="465.4" r="2.75" fill-opacity="0.78"/>
<circle cx="849.0" cy="472.1" r="2.75" fill-opacity="0.78"/>
<circle cx="854.3" cy="475.5" r="2.75" fill-opacity="0.78"/>
<circle cx="859.6" cy="475.3" r="2.75" fill-opacity="0.79"/>
<circle cx="864.9" cy="471.8" r="2.75" fill-opacity="0.81"/>
<circle cx="870.2" cy="465.8" r="2.75" fill-opacity="0.83"/>
<circle cx="875.6" cy="458.4" r="2.75" fill-opacity="0.85"/>
<circle cx="881.1" cy="450.8" r="2.75" fill-opacity="0.87"/>
<circle cx="886.6" cy="444.6" r="2.75" fill-opacity="0.89"/>
<circle cx="892.1" cy="441.0" r="2.75" fill-opacity="0.91"/>
<circle cx="897.6" cy="440.8" r="2.75" fill-opacity="0.92"/>
<circle cx="908.5" cy="451.1" r="2.75" fill-opacity="0.93"/>
<circle cx="913.9" cy="460.6" r="2.75" fill-opacity="0.92"/>
<circle cx="919.3" cy="471.4" r="2.75" fill-opacity="0.91"/>
<circle cx="754.0" cy="418.3" r="2.75" fill-opacity="0.66"/>
<circle cx="759.5" cy="436.2" r="2.75" fill-opacity="0.64"/>
<circle cx="765.0" cy="451.5" r="2.75" fill-opacity="0.63"/>
<circle cx="775.4" cy="466.9" r="2.75" fill-opacity="0.62"/>
<circle cx="780.3" cy="465.2" r="2.75" fill-opacity="0.63"/>
<circle cx="785.1" cy="457.6" r="2.75" fill-opacity="0.65"/>
<circle cx="789.9" cy="445.4" r="2.75" fill-opacity="0.68"/>
<circle cx="794.6" cy="430.5" r="2.75" fill-opacity="0.72"/>
<circle cx="799.4" cy="415.4" r="2.75" fill-opacity="0.75"/>
<circle cx="804.3" cy="402.6" r="2.75" fill-opacity="0.78"/>
<circle cx="819.9" cy="397.5" r="2.75" fill-opacity="0.82"/>
<circle cx="825.3" cy="408.7" r="2.75" fill-opacity="0.81"/>
<circle cx="836.2" cy="442.9" r="2.75" fill-opacity="0.78"/>
<circle cx="846.9" cy="476.6" r="2.75" fill-opacity="0.74"/>
<circle cx="857.4" cy="492.3" r="2.75" fill-opacity="0.74"/>
<circle cx="862.7" cy="490.7" r="2.75" fill-opacity="0.75"/>
<circle cx="868.0" cy="483.1" r="2.75" fill-opacity="0.77"/>
<circle cx="873.3" cy="470.7" r="2.75" fill-opacity="0.80"/>
<circle cx="889.7" cy="427.4" r="2.75" fill-opacity="0.90"/>
<circle cx="895.3" cy="419.2" r="2.75" fill-opacity="0.93"/>
<circle cx="906.3" cy="422.4" r="2.75" fill-opacity="0.94"/>
<circle cx="917.0" cy="449.9" r="2.75" fill-opacity="0.92"/>
<circle cx="922.3" cy="468.6" r="2.75" fill-opacity="0.90"/>
<circle cx="757.2" cy="415.8" r="2.75" fill-opacity="0.65"/>
<circle cx="762.9" cy="438.6" r="2.75" fill-opacity="0.62"/>
<circle cx="768.5" cy="457.9" r="2.75" fill-opacity="0.60"/>
<circle cx="773.8" cy="471.3" r="2.75" fill-opacity="0.59"/>
<circle cx="778.9" cy="477.0" r="2.75" fill-opacity="0.59"/>
<circle cx="783.8" cy="474.4" r="2.75" fill-opacity="0.60"/>
<circle cx="788.5" cy="464.1" r="2.75" fill-opacity="0.63"/>
<circle cx="793.2" cy="447.7" r="2.75" fill-opacity="0.66"/>
<circle cx="797.8" cy="427.8" r="2.75" fill-opacity="0.71"/>
<circle cx="807.3" cy="390.4" r="2.75" fill-opacity="0.79"/>
<circle cx="812.3" cy="379.3" r="2.75" fill-opacity="0.81"/>
<circle cx="822.9" cy="382.3" r="2.75" fill-opacity="0.83"/>
<circle cx="828.3" cy="396.4" r="2.75" fill-opacity="0.82"/>
<circle cx="839.3" cy="440.2" r="2.75" fill-opacity="0.76"/>
<circle cx="844.7" cy="463.4" r="2.75" fill-opacity="0.74"/>
<circle cx="855.3" cy="496.7" r="2.75" fill-opacity="0.70"/>
<circle cx="860.5" cy="502.5" r="2.75" fill-opacity="0.70"/>
<circle cx="865.7" cy="499.9" r="2.75" fill-opacity="0.72"/>
<circle cx="871.0" cy="489.5" r="2.75" fill-opacity="0.74"/>
<circle cx="887.3" cy="432.3" r="2.75" fill-opacity="0.87"/>
<circle cx="892.9" cy="414.9" r="2.75" fill-opacity="0.91"/>
<circle cx="898.5" cy="403.6" r="2.75" fill-opacity="0.94"/>
<circle cx="904.1" cy="400.7" r="2.75" fill-opacity="0.95"/>
<circle cx="909.6" cy="406.8" r="2.75" fill-opacity="0.95"/>
<circle cx="914.9" cy="421.2" r="2.75" fill-opacity="0.94"/>
<circle cx="920.1" cy="441.9" r="2.75" fill-opacity="0.91"/>
<circle cx="925.2" cy="465.7" r="2.75" fill-opacity="0.89"/>
<circle cx="760.5" cy="413.2" r="2.75" fill-opacity="0.64"/>
<circle cx="766.2" cy="437.7" r="2.75" fill-opacity="0.61"/>
<circle cx="771.8" cy="458.4" r="2.75" fill-opacity="0.58"/>
<circle cx="782.2" cy="478.7" r="2.75" fill-opacity="0.57"/>
<circle cx="787.1" cy="475.8" r="2.75" fill-opacity="0.58"/>
<circle cx="791.8" cy="464.6" r="2.75" fill-opacity="0.61"/>
<circle cx="796.4" cy="446.8" r="2.75" fill-opacity="0.65"/>
<circle cx="805.6" cy="403.2" r="2.75" fill-opacity="0.74"/>
<circle cx="810.5" cy="384.5" r="2.75" fill-opacity="0.78"/>
<circle cx="815.5" cy="372.3" r="2.75" fill-opacity="0.81"/>
<circle cx="820.7" cy="368.9" r="2.75" fill-opacity="0.82"/>
<circle cx="831.5" cy="390.4" r="2.75" fill-opacity="0.81"/>
<circle cx="837.0" cy="412.3" r="2.75" fill-opacity="0.78"/>
<circle cx="847.8" cy="462.4" r="2.75" fill-opacity="0.72"/>
<circle cx="858.4" cy="498.0" r="2.75" fill-opacity="0.68"/>
<circle cx="868.8" cy="501.3" r="2.75" fill-opacity="0.70"/>
<circle cx="874.0" cy="489.9" r="2.75" fill-opacity="0.72"/>
<circle cx="884.8" cy="450.0" r="2.75" fill-opacity="0.81"/>
<circle cx="890.4" cy="427.8" r="2.75" fill-opacity="0.86"/>
<circle cx="896.0" cy="408.8" r="2.75" fill-opacity="0.90"/>
<circle cx="901.6" cy="396.4" r="2.75" fill-opacity="0.93"/>
<circle cx="912.7" cy="399.5" r="2.75" fill-opacity="0.95"/>
<circle cx="923.2" cy="437.3" r="2.75" fill-opacity="0.90"/>
<circle cx="769.3" cy="433.3" r="2.75" fill-opacity="0.60"/>
<circle cx="774.8" cy="452.6" r="2.75" fill-opacity="0.58"/>
<circle cx="780.1" cy="465.9" r="2.75" fill-opacity="0.56"/>
<circle cx="785.2" cy="471.6" r="2.75" fill-opacity="0.56"/>
<circle cx="790.1" cy="469.0" r="2.75" fill-opacity="0.58"/>
<circle cx="794.8" cy="458.7" r="2.75" fill-opacity="0.60"/>
<circle cx="799.5" cy="442.4" r="2.75" fill-opacity="0.64"/>
<circle cx="804.1" cy="422.6" r="2.75" fill-opacity="0.68"/>
<circle cx="808.9" cy="402.4" r="2.75" fill-opacity="0.72"/>
<circle cx="818.8" cy="374.2" r="2.75" fill-opacity="0.79"/>
<circle cx="829.3" cy="377.1" r="2.75" fill-opacity="0.80"/>
<circle cx="834.7" cy="391.2" r="2.75" fill-opacity="0.79"/>
<circle cx="840.1" cy="411.4" r="2.75" fill-opacity="0.77"/>
<circle cx="856.1" cy="477.5" r="2.75" fill-opacity="0.69"/>
<circle cx="866.6" cy="496.9" r="2.75" fill-opacity="0.68"/>
<circle cx="871.8" cy="494.3" r="2.75" fill-opacity="0.69"/>
<circle cx="877.0" cy="483.9" r="2.75" fill-opacity="0.72"/>
<circle cx="882.4" cy="467.4" r="2.75" fill-opacity="0.75"/>
<circle cx="893.4" cy="426.9" r="2.75" fill-opacity="0.84"/>
<circle cx="899.0" cy="409.5" r="2.75" fill-opacity="0.88"/>
<circle cx="904.6" cy="398.3" r="2.75" fill-opacity="0.91"/>
<circle cx="910.2" cy="395.3" r="2.75" fill-opacity="0.92"/>
<circle cx="915.6" cy="401.4" r="2.75" fill-opacity="0.92"/>
<circle cx="926.1" cy="436.3" r="2.75" fill-opacity="0.89"/>
<circle cx="931.2" cy="460.1" r="2.75" fill-opacity="0.86"/>
<circle cx="772.4" cy="425.8" r="2.75" fill-opacity="0.59"/>
<circle cx="777.7" cy="440.9" r="2.75" fill-opacity="0.58"/>
<circle cx="783.0" cy="451.5" r="2.75" fill-opacity="0.57"/>
<circle cx="788.0" cy="456.2" r="2.75" fill-opacity="0.57"/>
<circle cx="792.9" cy="454.6" r="2.75" fill-opacity="0.58"/>
<circle cx="797.8" cy="447.0" r="2.75" fill-opacity="0.61"/>
<circle cx="802.5" cy="434.8" r="2.75" fill-opacity="0.64"/>
<circle cx="807.3" cy="420.0" r="2.75" fill-opacity="0.67"/>
<circle cx="812.1" cy="404.9" r="2.75" fill-opacity="0.70"/>
<circle cx="817.0" cy="392.2" r="2.75" fill-opacity="0.73"/>
<circle cx="827.3" cy="382.3" r="2.75" fill-opacity="0.77"/>
<circle cx="832.6" cy="387.1" r="2.75" fill-opacity="0.77"/>
<circle cx="837.9" cy="398.2" r="2.75" fill-opacity="0.76"/>
<circle cx="859.1" cy="465.6" r="2.75" fill-opacity="0.69"/>
<circle cx="864.4" cy="476.4" r="2.75" fill-opacity="0.68"/>
<circle cx="869.6" cy="481.2" r="2.75" fill-opacity="0.69"/>
<circle cx="874.8" cy="479.5" r="2.75" fill-opacity="0.70"/>
<circle cx="880.1" cy="471.9" r="2.75" fill-opacity="0.72"/>
<circle cx="885.4" cy="459.6" r="2.75" fill-opacity="0.75"/>
<circle cx="890.9" cy="444.6" r="2.75" fill-opacity="0.78"/>
<circle cx="896.4" cy="429.3" r="2.75" fill-opacity="0.82"/>
<circle cx="901.9" cy="416.5" r="2.75" fill-opacity="0.85"/>
<circle cx="907.5" cy="408.4" r="2.75" fill-opacity="0.87"/>
<circle cx="918.4" cy="411.5" r="2.75" fill-opacity="0.89"/>
<circle cx="923.8" cy="422.8" r="2.75" fill-opacity="0.88"/>
<circle cx="929.0" cy="438.8" r="2.75" fill-opacity="0.87"/>
<circle cx="934.1" cy="457.3" r="2.75" fill-opacity="0.85"/>
<circle cx="770.1" cy="405.5" r="2.75" fill-opacity="0.60"/>
<circle cx="775.3" cy="415.8" r="2.75" fill-opacity="0.59"/>
<circle cx="780.5" cy="424.7" r="2.75" fill-opacity="0.59"/>
<circle cx="785.6" cy="431.1" r="2.75" fill-opacity="0.59"/>
<circle cx="790.7" cy="434.4" r="2.75" fill-opacity="0.59"/>
<circle cx="810.4" cy="417.4" r="2.75" fill-opacity="0.66"/>
<circle cx="815.4" cy="409.9" r="2.75" fill-opacity="0.68"/>
<circle cx="820.4" cy="403.8" r="2.75" fill-opacity="0.70"/>
<circle cx="825.5" cy="400.2" r="2.75" fill-opacity="0.71"/>
<circle cx="830.7" cy="399.9" r="2.75" fill-opacity="0.72"/>
<circle cx="835.9" cy="403.2" r="2.75" fill-opacity="0.73"/>
<circle cx="841.1" cy="409.8" r="2.75" fill-opacity="0.73"/>
<circle cx="851.7" cy="429.5" r="2.75" fill-opacity="0.71"/>
<circle cx="856.9" cy="439.9" r="2.75" fill-opacity="0.71"/>
<circle cx="872.6" cy="458.9" r="2.75" fill-opacity="0.70"/>
<circle cx="877.8" cy="458.7" r="2.75" fill-opacity="0.71"/>
<circle cx="883.1" cy="455.3" r="2.75" fill-opacity="0.73"/>
<circle cx="899.3" cy="434.4" r="2.75" fill-opacity="0.79"/>
<circle cx="904.8" cy="428.2" r="2.75" fill-opacity="0.81"/>
<circle cx="910.2" cy="424.6" r="2.75" fill-opacity="0.83"/>
<circle cx="915.7" cy="424.3" r="2.75" fill-opacity="0.84"/>
<circle cx="926.5" cy="434.5" r="2.75" fill-opacity="0.84"/>
<circle cx="931.8" cy="443.8" r="2.75" fill-opacity="0.84"/>
<circle cx="937.0" cy="454.5" r="2.75" fill-opacity="0.83"/>
<circle cx="773.3" cy="403.0" r="2.75" fill-opacity="0.59"/>
<circle cx="778.3" cy="404.5" r="2.75" fill-opacity="0.59"/>
<circle cx="788.3" cy="407.4" r="2.75" fill-opacity="0.61"/>
<circle cx="793.3" cy="408.9" r="2.75" fill-opacity="0.62"/>
<circle cx="798.3" cy="410.3" r="2.75" fill-opacity="0.62"/>
<circle cx="803.4" cy="411.8" r="2.75" fill-opacity="0.63"/>
<circle cx="808.5" cy="413.3" r="2.75" fill-opacity="0.64"/>
<circle cx="813.5" cy="414.8" r="2.75" fill-opacity="0.64"/>
<circle cx="818.6" cy="416.3" r="2.75" fill-opacity="0.65"/>
<circle cx="828.9" cy="419.3" r="2.75" fill-opacity="0.66"/>
<circle cx="839.2" cy="422.3" r="2.75" fill-opacity="0.68"/>
<circle cx="844.3" cy="423.8" r="2.75" fill-opacity="0.69"/>
<circle cx="849.5" cy="425.3" r="2.75" fill-opacity="0.69"/>
<circle cx="854.7" cy="426.8" r="2.75" fill-opacity="0.70"/>
<circle cx="859.9" cy="428.3" r="2.75" fill-opacity="0.71"/>
<circle cx="865.2" cy="429.9" r="2.75" fill-opacity="0.72"/>
<circle cx="875.7" cy="432.9" r="2.75" fill-opacity="0.73"/>
<circle cx="880.9" cy="434.5" r="2.75" fill-opacity="0.74"/>
<circle cx="886.2" cy="436.0" r="2.75" fill-opacity="0.74"/>
<circle cx="891.5" cy="437.6" r="2.75" fill-opacity="0.75"/>
<circle cx="912.9" cy="443.8" r="2.75" fill-opacity="0.78"/>
<circle cx="923.7" cy="447.0" r="2.75" fill-opacity="0.80"/>
<circle cx="929.1" cy="448.6" r="2.75" fill-opacity="0.80"/>
<circle cx="934.5" cy="450.2" r="2.75" fill-opacity="0.81"/>
<circle cx="939.9" cy="451.7" r="2.75" fill-opacity="0.82"/>
<circle cx="776.4" cy="400.5" r="2.75" fill-opacity="0.58"/>
<circle cx="781.2" cy="393.1" r="2.75" fill-opacity="0.60"/>
<circle cx="790.9" cy="383.4" r="2.75" fill-opacity="0.63"/>
<circle cx="795.9" cy="383.1" r="2.75" fill-opacity="0.64"/>
<circle cx="806.2" cy="392.8" r="2.75" fill-opacity="0.64"/>
<circle cx="811.4" cy="401.9" r="2.75" fill-opacity="0.64"/>
<circle cx="816.6" cy="412.2" r="2.75" fill-opacity="0.63"/>
<circle cx="821.9" cy="422.5" r="2.75" fill-opacity="0.62"/>
<circle cx="827.0" cy="431.5" r="2.75" fill-opacity="0.62"/>
<circle cx="832.2" cy="438.0" r="2.75" fill-opacity="0.62"/>
<circle cx="837.3" cy="441.2" r="2.75" fill-opacity="0.62"/>
<circle cx="842.4" cy="441.0" r="2.75" fill-opacity="0.63"/>
<circle cx="847.5" cy="437.5" r="2.75" fill-opacity="0.65"/>
<circle cx="852.6" cy="431.6" r="2.75" fill-opacity="0.67"/>
<circle cx="857.8" cy="424.2" r="2.75" fill-opacity="0.69"/>
<circle cx="868.2" cy="410.6" r="2.75" fill-opacity="0.73"/>
<circle cx="884.0" cy="410.0" r="2.75" fill-opacity="0.76"/>
<circle cx="889.3" cy="416.7" r="2.75" fill-opacity="0.76"/>
<circle cx="894.6" cy="425.9" r="2.75" fill-opacity="0.75"/>
<circle cx="899.8" cy="436.4" r="2.75" fill-opacity="0.75"/>
<circle cx="905.0" cy="447.0" r="2.75" fill-opacity="0.74"/>
<circle cx="915.5" cy="462.7" r="2.75" fill-opacity="0.73"/>
<circle cx="920.8" cy="466.1" r="2.75" fill-opacity="0.74"/>
<circle cx="926.2" cy="465.9" r="2.75" fill-opacity="0.75"/>
<circle cx="937.2" cy="456.4" r="2.75" fill-opacity="0.78"/>
<circle cx="942.8" cy="449.0" r="2.75" fill-opacity="0.81"/>
<circle cx="784.1" cy="383.1" r="2.75" fill-opacity="0.60"/>
<circle cx="793.6" cy="362.6" r="2.75" fill-opacity="0.65"/>
<circle cx="798.6" cy="360.7" r="2.75" fill-opacity="0.66"/>
<circle cx="803.8" cy="365.4" r="2.75" fill-opacity="0.66"/>
<circle cx="809.1" cy="376.3" r="2.75" fill-opacity="0.65"/>
<circle cx="814.4" cy="391.8" r="2.75" fill-opacity="0.64"/>
<circle cx="819.7" cy="409.6" r="2.75" fill-opacity="0.62"/>
<circle cx="830.2" cy="442.6" r="2.75" fill-opacity="0.59"/>
<circle cx="835.4" cy="453.1" r="2.75" fill-opacity="0.58"/>
<circle cx="840.5" cy="457.8" r="2.75" fill-opacity="0.58"/>
<circle cx="845.5" cy="456.2" r="2.75" fill-opacity="0.59"/>
<circle cx="855.6" cy="436.4" r="2.75" fill-opacity="0.64"/>
<circle cx="866.0" cy="406.5" r="2.75" fill-opacity="0.71"/>
<circle cx="871.2" cy="393.8" r="2.75" fill-opacity="0.74"/>
<circle cx="881.9" cy="383.9" r="2.75" fill-opacity="0.77"/>
<circle cx="887.2" cy="388.7" r="2.75" fill-opacity="0.78"/>
<circle cx="897.6" cy="415.6" r="2.75" fill-opacity="0.75"/>
<circle cx="907.9" cy="451.8" r="2.75" fill-opacity="0.71"/>
<circle cx="918.1" cy="478.1" r="2.75" fill-opacity="0.69"/>
<circle cx="928.7" cy="481.2" r="2.75" fill-opacity="0.71"/>
<circle cx="934.2" cy="473.6" r="2.75" fill-opacity="0.73"/>
<circle cx="939.9" cy="461.3" r="2.75" fill-opacity="0.76"/>
<circle cx="945.7" cy="446.3" r="2.75" fill-opacity="0.79"/>
<circle cx="782.7" cy="395.5" r="2.75" fill-opacity="0.55"/>
<circle cx="787.2" cy="375.6" r="2.75" fill-opacity="0.59"/>
<circle cx="791.7" cy="358.7" r="2.75" fill-opacity="0.63"/>
<circle cx="796.5" cy="347.8" r="2.75" fill-opacity="0.65"/>
<circle cx="801.5" cy="344.8" r="2.75" fill-opacity="0.67"/>
<circle cx="806.7" cy="350.6" r="2.75" fill-opacity="0.67"/>
<circle cx="812.0" cy="364.4" r="2.75" fill-opacity="0.66"/>
<circle cx="817.4" cy="384.2" r="2.75" fill-opacity="0.63"/>
<circle cx="822.8" cy="407.1" r="2.75" fill-opacity="0.61"/>
<circle cx="828.1" cy="429.7" r="2.75" fill-opacity="0.58"/>
<circle cx="833.4" cy="449.0" r="2.75" fill-opacity="0.56"/>
<circle cx="843.6" cy="467.9" r="2.75" fill-opacity="0.55"/>
<circle cx="848.6" cy="465.3" r="2.75" fill-opacity="0.56"/>
<circle cx="858.7" cy="438.8" r="2.75" fill-opacity="0.62"/>
<circle cx="863.8" cy="419.0" r="2.75" fill-opacity="0.66"/>
<circle cx="869.0" cy="398.8" r="2.75" fill-opacity="0.70"/>
<circle cx="874.3" cy="381.7" r="2.75" fill-opacity="0.74"/>
<circle cx="879.6" cy="370.7" r="2.75" fill-opacity="0.77"/>
<circle cx="884.9" cy="367.7" r="2.75" fill-opacity="0.78"/>
<circle cx="890.3" cy="373.6" r="2.75" fill-opacity="0.78"/>
<circle cx="895.5" cy="387.6" r="2.75" fill-opacity="0.77"/>
<circle cx="905.7" cy="431.1" r="2.75" fill-opacity="0.72"/>
<circle cx="910.7" cy="454.1" r="2.75" fill-opacity="0.69"/>
<circle cx="915.7" cy="473.7" r="2.75" fill-opacity="0.67"/>
<circle cx="920.8" cy="487.2" r="2.75" fill-opacity="0.66"/>
<circle cx="931.3" cy="490.4" r="2.75" fill-opacity="0.67"/>
<circle cx="936.9" cy="480.1" r="2.75" fill-opacity="0.70"/>
<circle cx="942.6" cy="463.6" r="2.75" fill-opacity="0.74"/>
<circle cx="948.6" cy="443.5" r="2.75" fill-opacity="0.78"/>
<circle cx="785.8" cy="393.0" r="2.75" fill-opacity="0.54"/>
<circle cx="790.2" cy="371.4" r="2.75" fill-opacity="0.58"/>
<circle cx="799.6" cy="341.0" r="2.75" fill-opacity="0.65"/>
<circle cx="804.6" cy="337.7" r="2.75" fill-opacity="0.66"/>
<circle cx="809.8" cy="343.8" r="2.75" fill-opacity="0.66"/>
<circle cx="815.1" cy="358.6" r="2.75" fill-opacity="0.65"/>
<circle cx="820.5" cy="379.9" r="2.75" fill-opacity="0.62"/>
<circle cx="825.9" cy="404.6" r="2.75" fill-opacity="0.60"/>
<circle cx="831.2" cy="428.9" r="2.75" fill-opacity="0.57"/>
<circle cx="836.4" cy="449.6" r="2.75" fill-opacity="0.54"/>
<circle cx="841.5" cy="463.7" r="2.75" fill-opacity="0.53"/>
<circle cx="846.6" cy="469.7" r="2.75" fill-opacity="0.53"/>
<circle cx="851.6" cy="466.8" r="2.75" fill-opacity="0.54"/>
<circle cx="856.6" cy="455.6" r="2.75" fill-opacity="0.57"/>
<circle cx="861.6" cy="437.9" r="2.75" fill-opacity="0.61"/>
<circle cx="866.8" cy="416.4" r="2.75" fill-opacity="0.65"/>
<circle cx="872.0" cy="394.5" r="2.75" fill-opacity="0.70"/>
<circle cx="877.3" cy="375.8" r="2.75" fill-opacity="0.73"/>
<circle cx="882.6" cy="363.7" r="2.75" fill-opacity="0.76"/>
<circle cx="898.5" cy="381.7" r="2.75" fill-opacity="0.76"/>
<circle cx="903.6" cy="403.4" r="2.75" fill-opacity="0.74"/>
<circle cx="908.6" cy="428.5" r="2.75" fill-opacity="0.71"/>
<circle cx="918.5" cy="474.2" r="2.75" fill-opacity="0.65"/>
<circle cx="928.7" cy="494.7" r="2.75" fill-opacity="0.64"/>
<circle cx="934.1" cy="491.8" r="2.75" fill-opacity="0.65"/>
<circle cx="945.4" cy="462.6" r="2.75" fill-opacity="0.72"/>
<circle cx="951.4" cy="440.8" r="2.75" fill-opacity="0.77"/>
<circle cx="788.9" cy="390.5" r="2.75" fill-opacity="0.53"/>
<circle cx="802.8" cy="343.0" r="2.75" fill-opacity="0.63"/>
<circle cx="807.8" cy="340.0" r="2.75" fill-opacity="0.64"/>
<circle cx="813.0" cy="345.7" r="2.75" fill-opacity="0.64"/>
<circle cx="823.6" cy="379.2" r="2.75" fill-opacity="0.61"/>
<circle cx="828.9" cy="402.0" r="2.75" fill-opacity="0.58"/>
<circle cx="839.4" cy="443.8" r="2.75" fill-opacity="0.54"/>
<circle cx="854.5" cy="460.0" r="2.75" fill-opacity="0.54"/>
<circle cx="859.5" cy="449.8" r="2.75" fill-opacity="0.56"/>
<circle cx="869.8" cy="413.8" r="2.75" fill-opacity="0.64"/>
<circle cx="875.0" cy="393.7" r="2.75" fill-opacity="0.68"/>
<circle cx="891.0" cy="362.6" r="2.75" fill-opacity="0.76"/>
<circle cx="896.2" cy="368.5" r="2.75" fill-opacity="0.76"/>
<circle cx="901.4" cy="382.5" r="2.75" fill-opacity="0.75"/>
<circle cx="906.5" cy="402.6" r="2.75" fill-opacity="0.72"/>
<circle cx="911.5" cy="425.8" r="2.75" fill-opacity="0.70"/>
<circle cx="916.5" cy="448.8" r="2.75" fill-opacity="0.67"/>
<circle cx="921.4" cy="468.3" r="2.75" fill-opacity="0.65"/>
<circle cx="926.5" cy="481.7" r="2.75" fill-opacity="0.63"/>
<circle cx="937.0" cy="484.9" r="2.75" fill-opacity="0.65"/>
<circle cx="942.5" cy="474.6" r="2.75" fill-opacity="0.68"/>
<circle cx="948.3" cy="458.1" r="2.75" fill-opacity="0.71"/>
<circle cx="954.3" cy="438.1" r="2.75" fill-opacity="0.75"/>
<circle cx="796.6" cy="373.3" r="2.75" fill-opacity="0.55"/>
<circle cx="801.3" cy="360.8" r="2.75" fill-opacity="0.58"/>
<circle cx="806.2" cy="352.9" r="2.75" fill-opacity="0.60"/>
<circle cx="811.1" cy="351.0" r="2.75" fill-opacity="0.61"/>
<circle cx="816.3" cy="355.7" r="2.75" fill-opacity="0.61"/>
<circle cx="821.5" cy="366.4" r="2.75" fill-opacity="0.60"/>
<circle cx="826.7" cy="381.8" r="2.75" fill-opacity="0.59"/>
<circle cx="831.9" cy="399.5" r="2.75" fill-opacity="0.57"/>
<circle cx="842.3" cy="432.2" r="2.75" fill-opacity="0.54"/>
<circle cx="847.4" cy="442.7" r="2.75" fill-opacity="0.53"/>
<circle cx="852.4" cy="447.3" r="2.75" fill-opacity="0.53"/>
<circle cx="862.5" cy="438.1" r="2.75" fill-opacity="0.57"/>
<circle cx="867.6" cy="426.0" r="2.75" fill-opacity="0.59"/>
<circle cx="872.7" cy="411.2" r="2.75" fill-opacity="0.63"/>
<circle cx="877.9" cy="396.3" r="2.75" fill-opacity="0.66"/>
<circle cx="883.2" cy="383.6" r="2.75" fill-opacity="0.69"/>
<circle cx="888.5" cy="375.6" r="2.75" fill-opacity="0.71"/>
<circle cx="893.8" cy="373.7" r="2.75" fill-opacity="0.72"/>
<circle cx="899.1" cy="378.5" r="2.75" fill-opacity="0.73"/>
<circle cx="904.3" cy="389.5" r="2.75" fill-opacity="0.72"/>
<circle cx="909.4" cy="405.1" r="2.75" fill-opacity="0.70"/>
<circle cx="914.4" cy="423.2" r="2.75" fill-opacity="0.68"/>
<circle cx="924.4" cy="456.4" r="2.75" fill-opacity="0.65"/>
<circle cx="934.7" cy="471.9" r="2.75" fill-opacity="0.64"/>
<circle cx="945.6" cy="462.7" r="2.75" fill-opacity="0.68"/>
<circle cx="799.9" cy="378.3" r="2.75" fill-opacity="0.53"/>
<circle cx="809.6" cy="368.7" r="2.75" fill-opacity="0.56"/>
<circle cx="814.5" cy="368.3" r="2.75" fill-opacity="0.57"/>
<circle cx="819.6" cy="371.5" r="2.75" fill-opacity="0.57"/>
<circle cx="824.7" cy="377.9" r="2.75" fill-opacity="0.57"/>
<circle cx="829.8" cy="386.8" r="2.75" fill-opacity="0.57"/>
<circle cx="834.9" cy="397.0" r="2.75" fill-opacity="0.56"/>
<circle cx="840.1" cy="407.2" r="2.75" fill-opacity="0.55"/>
<circle cx="845.2" cy="416.1" r="2.75" fill-opacity="0.55"/>
<circle cx="850.2" cy="422.5" r="2.75" fill-opacity="0.55"/>
<circle cx="855.3" cy="425.7" r="2.75" fill-opacity="0.55"/>
<circle cx="865.4" cy="421.9" r="2.75" fill-opacity="0.58"/>
<circle cx="870.5" cy="416.0" r="2.75" fill-opacity="0.59"/>
<circle cx="875.7" cy="408.7" r="2.75" fill-opacity="0.61"/>
<circle cx="886.1" cy="395.2" r="2.75" fill-opacity="0.65"/>
<circle cx="891.3" cy="391.6" r="2.75" fill-opacity="0.67"/>
<circle cx="896.6" cy="391.2" r="2.75" fill-opacity="0.68"/>
<circle cx="901.8" cy="394.5" r="2.75" fill-opacity="0.68"/>
<circle cx="907.0" cy="401.1" r="2.75" fill-opacity="0.68"/>
<circle cx="912.2" cy="410.2" r="2.75" fill-opacity="0.68"/>
<circle cx="922.4" cy="431.0" r="2.75" fill-opacity="0.66"/>
<circle cx="927.6" cy="440.0" r="2.75" fill-opacity="0.66"/>
<circle cx="932.7" cy="446.5" r="2.75" fill-opacity="0.66"/>
<circle cx="943.3" cy="449.6" r="2.75" fill-opacity="0.67"/>
<circle cx="948.7" cy="446.1" r="2.75" fill-opacity="0.69"/>
<circle cx="954.3" cy="440.1" r="2.75" fill-opacity="0.71"/>
<circle cx="959.9" cy="432.8" r="2.75" fill-opacity="0.73"/>
<circle cx="798.2" cy="383.2" r="2.75" fill-opacity="0.49"/>
<circle cx="803.1" cy="384.6" r="2.75" fill-opacity="0.50"/>
<circle cx="808.0" cy="386.0" r="2.75" fill-opacity="0.51"/>
<circle cx="818.0" cy="388.8" r="2.75" fill-opacity="0.52"/>
<circle cx="822.9" cy="390.3" r="2.75" fill-opacity="0.53"/>
<circle cx="827.9" cy="391.7" r="2.75" fill-opacity="0.53"/>
<circle cx="832.9" cy="393.1" r="2.75" fill-opacity="0.54"/>
<circle cx="837.9" cy="394.5" r="2.75" fill-opacity="0.55"/>
<circle cx="843.0" cy="396.0" r="2.75" fill-opacity="0.55"/>
<circle cx="848.0" cy="397.4" r="2.75" fill-opacity="0.56"/>
<circle cx="858.2" cy="400.3" r="2.75" fill-opacity="0.57"/>
<circle cx="863.3" cy="401.8" r="2.75" fill-opacity="0.58"/>
<circle cx="873.5" cy="404.7" r="2.75" fill-opacity="0.60"/>
<circle cx="878.6" cy="406.1" r="2.75" fill-opacity="0.60"/>
<circle cx="883.7" cy="407.6" r="2.75" fill-opacity="0.61"/>
<circle cx="894.1" cy="410.5" r="2.75" fill-opacity="0.62"/>
<circle cx="899.3" cy="412.0" r="2.75" fill-opacity="0.63"/>
<circle cx="904.5" cy="413.5" r="2.75" fill-opacity="0.64"/>
<circle cx="909.7" cy="415.0" r="2.75" fill-opacity="0.64"/>
<circle cx="925.4" cy="419.5" r="2.75" fill-opacity="0.67"/>
<circle cx="936.0" cy="422.5" r="2.75" fill-opacity="0.68"/>
<circle cx="946.6" cy="425.5" r="2.75" fill-opacity="0.69"/>
<circle cx="952.0" cy="427.0" r="2.75" fill-opacity="0.70"/>
<circle cx="957.3" cy="428.6" r="2.75" fill-opacity="0.71"/>
<circle cx="962.7" cy="430.1" r="2.75" fill-opacity="0.72"/>
<circle cx="806.3" cy="390.8" r="2.75" fill-opacity="0.48"/>
<circle cx="811.3" cy="399.6" r="2.75" fill-opacity="0.47"/>
<circle cx="821.3" cy="409.0" r="2.75" fill-opacity="0.47"/>
<circle cx="826.2" cy="408.7" r="2.75" fill-opacity="0.48"/>
<circle cx="831.1" cy="405.3" r="2.75" fill-opacity="0.50"/>
<circle cx="836.0" cy="399.4" r="2.75" fill-opacity="0.52"/>
<circle cx="840.9" cy="392.1" r="2.75" fill-opacity="0.54"/>
<circle cx="850.9" cy="378.7" r="2.75" fill-opacity="0.57"/>
<circle cx="856.0" cy="375.1" r="2.75" fill-opacity="0.59"/>
<circle cx="861.1" cy="374.7" r="2.75" fill-opacity="0.60"/>
<circle cx="866.2" cy="377.9" r="2.75" fill-opacity="0.60"/>
<circle cx="871.3" cy="384.4" r="2.75" fill-opacity="0.60"/>
<circle cx="876.4" cy="393.3" r="2.75" fill-opacity="0.60"/>
<circle cx="881.5" cy="403.6" r="2.75" fill-opacity="0.59"/>
<circle cx="886.6" cy="413.8" r="2.75" fill-opacity="0.58"/>
<circle cx="891.7" cy="422.7" r="2.75" fill-opacity="0.58"/>
<circle cx="896.8" cy="429.2" r="2.75" fill-opacity="0.58"/>
<circle cx="907.1" cy="432.2" r="2.75" fill-opacity="0.59"/>
<circle cx="912.3" cy="428.7" r="2.75" fill-opacity="0.61"/>
<circle cx="923.0" cy="415.4" r="2.75" fill-opacity="0.65"/>
<circle cx="928.5" cy="408.0" r="2.75" fill-opacity="0.67"/>
<circle cx="933.9" cy="401.9" r="2.75" fill-opacity="0.69"/>
<circle cx="939.3" cy="398.3" r="2.75" fill-opacity="0.70"/>
<circle cx="944.7" cy="397.9" r="2.75" fill-opacity="0.71"/>
<circle cx="950.0" cy="401.2" r="2.75" fill-opacity="0.72"/>
<circle cx="960.4" cy="417.0" r="2.75" fill-opacity="0.71"/>
<circle cx="965.5" cy="427.4" r="2.75" fill-opacity="0.70"/>
<circle cx="804.3" cy="378.4" r="2.75" fill-opacity="0.47"/>
<circle cx="809.5" cy="395.7" r="2.75" fill-opacity="0.45"/>
<circle cx="819.6" cy="420.8" r="2.75" fill-opacity="0.43"/>
<circle cx="824.5" cy="425.4" r="2.75" fill-opacity="0.43"/>
<circle cx="829.4" cy="423.7" r="2.75" fill-opacity="0.45"/>
<circle cx="834.2" cy="416.2" r="2.75" fill-opacity="0.47"/>
<circle cx="839.0" cy="404.2" r="2.75" fill-opacity="0.49"/>
<circle cx="843.9" cy="389.6" r="2.75" fill-opacity="0.52"/>
<circle cx="848.8" cy="374.8" r="2.75" fill-opacity="0.56"/>
<circle cx="853.8" cy="362.3" r="2.75" fill-opacity="0.58"/>
<circle cx="884.4" cy="401.1" r="2.75" fill-opacity="0.58"/>
<circle cx="889.4" cy="418.7" r="2.75" fill-opacity="0.56"/>
<circle cx="894.4" cy="433.8" r="2.75" fill-opacity="0.55"/>
<circle cx="899.5" cy="444.3" r="2.75" fill-opacity="0.54"/>
<circle cx="904.5" cy="449.0" r="2.75" fill-opacity="0.54"/>
<circle cx="909.7" cy="447.3" r="2.75" fill-opacity="0.55"/>
<circle cx="915.0" cy="439.8" r="2.75" fill-opacity="0.57"/>
<circle cx="920.4" cy="427.6" r="2.75" fill-opacity="0.60"/>
<circle cx="931.4" cy="397.8" r="2.75" fill-opacity="0.67"/>
<circle cx="937.0" cy="385.2" r="2.75" fill-opacity="0.70"/>
<circle cx="942.6" cy="377.2" r="2.75" fill-opacity="0.72"/>
<circle cx="948.0" cy="375.3" r="2.75" fill-opacity="0.73"/>
<circle cx="958.4" cy="391.1" r="2.75" fill-opacity="0.73"/>
<circle cx="963.4" cy="406.7" r="2.75" fill-opacity="0.71"/>
<circle cx="968.2" cy="424.8" r="2.75" fill-opacity="0.69"/>
<circle cx="807.3" cy="376.0" r="2.75" fill-opacity="0.46"/>
<circle cx="827.6" cy="435.4" r="2.75" fill-opacity="0.40"/>
<circle cx="846.9" cy="387.2" r="2.75" fill-opacity="0.51"/>
<circle cx="851.8" cy="367.4" r="2.75" fill-opacity="0.55"/>
<circle cx="856.8" cy="350.6" r="2.75" fill-opacity="0.59"/>
<circle cx="867.0" cy="336.7" r="2.75" fill-opacity="0.63"/>
<circle cx="872.1" cy="342.4" r="2.75" fill-opacity="0.63"/>
<circle cx="877.3" cy="356.1" r="2.75" fill-opacity="0.61"/>
<circle cx="882.3" cy="375.8" r="2.75" fill-opacity="0.59"/>
<circle cx="887.3" cy="398.6" r="2.75" fill-opacity="0.57"/>
<circle cx="892.3" cy="421.1" r="2.75" fill-opacity="0.54"/>
<circle cx="897.2" cy="440.2" r="2.75" fill-opacity="0.52"/>
<circle cx="902.2" cy="453.4" r="2.75" fill-opacity="0.51"/>
<circle cx="912.3" cy="456.4" r="2.75" fill-opacity="0.52"/>
<circle cx="917.6" cy="446.2" r="2.75" fill-opacity="0.55"/>
<circle cx="923.1" cy="430.0" r="2.75" fill-opacity="0.58"/>
<circle cx="928.7" cy="410.3" r="2.75" fill-opacity="0.62"/>
<circle cx="940.1" cy="373.2" r="2.75" fill-opacity="0.70"/>
<circle cx="956.5" cy="365.0" r="2.75" fill-opacity="0.74"/>
<circle cx="961.5" cy="379.0" r="2.75" fill-opacity="0.73"/>
<circle cx="966.3" cy="399.0" r="2.75" fill-opacity="0.71"/>
<circle cx="971.0" cy="422.2" r="2.75" fill-opacity="0.68"/>
<circle cx="815.5" cy="397.4" r="2.75" fill-opacity="0.42"/>
<circle cx="820.7" cy="417.6" r="2.75" fill-opacity="0.40"/>
<circle cx="830.6" cy="437.2" r="2.75" fill-opacity="0.39"/>
<circle cx="835.4" cy="434.3" r="2.75" fill-opacity="0.40"/>
<circle cx="845.0" cy="405.9" r="2.75" fill-opacity="0.46"/>
<circle cx="859.7" cy="344.9" r="2.75" fill-opacity="0.58"/>
<circle cx="864.8" cy="333.0" r="2.75" fill-opacity="0.61"/>
<circle cx="870.0" cy="329.6" r="2.75" fill-opacity="0.62"/>
<circle cx="875.1" cy="335.7" r="2.75" fill-opacity="0.62"/>
<circle cx="890.2" cy="396.1" r="2.75" fill-opacity="0.55"/>
<circle cx="895.1" cy="420.3" r="2.75" fill-opacity="0.53"/>
<circle cx="904.9" cy="454.9" r="2.75" fill-opacity="0.49"/>
<circle cx="925.9" cy="429.1" r="2.75" fill-opacity="0.57"/>
<circle cx="931.5" cy="407.7" r="2.75" fill-opacity="0.61"/>
<circle cx="937.2" cy="385.9" r="2.75" fill-opacity="0.65"/>
<circle cx="943.0" cy="367.4" r="2.75" fill-opacity="0.69"/>
<circle cx="948.7" cy="355.3" r="2.75" fill-opacity="0.72"/>
<circle cx="954.2" cy="351.9" r="2.75" fill-opacity="0.74"/>
<circle cx="959.4" cy="358.1" r="2.75" fill-opacity="0.74"/>
<circle cx="969.2" cy="394.7" r="2.75" fill-opacity="0.70"/>
<circle cx="818.5" cy="393.3" r="2.75" fill-opacity="0.41"/>
<circle cx="823.6" cy="412.0" r="2.75" fill-opacity="0.39"/>
<circle cx="828.6" cy="424.9" r="2.75" fill-opacity="0.38"/>
<circle cx="833.5" cy="430.4" r="2.75" fill-opacity="0.38"/>
<circle cx="838.3" cy="427.8" r="2.75" fill-opacity="0.39"/>
<circle cx="843.1" cy="417.7" r="2.75" fill-opacity="0.42"/>
<circle cx="847.9" cy="401.7" r="2.75" fill-opacity="0.45"/>
<circle cx="852.7" cy="382.3" r="2.75" fill-opacity="0.49"/>
<circle cx="857.7" cy="362.6" r="2.75" fill-opacity="0.53"/>
<circle cx="862.7" cy="345.8" r="2.75" fill-opacity="0.56"/>
<circle cx="867.8" cy="334.9" r="2.75" fill-opacity="0.59"/>
<circle cx="872.9" cy="332.0" r="2.75" fill-opacity="0.60"/>
<circle cx="878.0" cy="337.7" r="2.75" fill-opacity="0.60"/>
<circle cx="883.1" cy="351.3" r="2.75" fill-opacity="0.59"/>
<circle cx="902.9" cy="435.1" r="2.75" fill-opacity="0.50"/>
<circle cx="907.8" cy="448.2" r="2.75" fill-opacity="0.49"/>
<circle cx="917.9" cy="451.2" r="2.75" fill-opacity="0.50"/>
<circle cx="923.2" cy="441.0" r="2.75" fill-opacity="0.52"/>
<circle cx="928.7" cy="424.8" r="2.75" fill-opacity="0.56"/>
<circle cx="934.3" cy="405.2" r="2.75" fill-opacity="0.60"/>
<circle cx="940.0" cy="385.2" r="2.75" fill-opacity="0.64"/>
<circle cx="945.7" cy="368.2" r="2.75" fill-opacity="0.67"/>
<circle cx="951.4" cy="357.2" r="2.75" fill-opacity="0.70"/>
<circle cx="956.8" cy="354.2" r="2.75" fill-opacity="0.72"/>
<circle cx="962.1" cy="360.1" r="2.75" fill-opacity="0.72"/>
<circle cx="967.1" cy="374.0" r="2.75" fill-opacity="0.70"/>
<circle cx="976.5" cy="417.0" r="2.75" fill-opacity="0.65"/>
<circle cx="816.2" cy="368.9" r="2.75" fill-opacity="0.43"/>
<circle cx="821.4" cy="386.1" r="2.75" fill-opacity="0.41"/>
<circle cx="826.4" cy="400.8" r="2.75" fill-opacity="0.40"/>
<circle cx="831.3" cy="411.0" r="2.75" fill-opacity="0.39"/>
<circle cx="841.1" cy="413.8" r="2.75" fill-opacity="0.40"/>
<circle cx="845.9" cy="406.4" r="2.75" fill-opacity="0.42"/>
<circle cx="850.8" cy="394.4" r="2.75" fill-opacity="0.45"/>
<circle cx="860.6" cy="365.1" r="2.75" fill-opacity="0.51"/>
<circle cx="865.6" cy="352.7" r="2.75" fill-opacity="0.54"/>
<circle cx="870.7" cy="344.8" r="2.75" fill-opacity="0.56"/>
<circle cx="875.8" cy="342.9" r="2.75" fill-opacity="0.57"/>
<circle cx="880.9" cy="347.5" r="2.75" fill-opacity="0.57"/>
<circle cx="891.0" cy="373.5" r="2.75" fill-opacity="0.55"/>
<circle cx="895.9" cy="391.1" r="2.75" fill-opacity="0.53"/>
<circle cx="900.9" cy="408.6" r="2.75" fill-opacity="0.51"/>
<circle cx="905.8" cy="423.6" r="2.75" fill-opacity="0.50"/>
<circle cx="910.7" cy="434.0" r="2.75" fill-opacity="0.49"/>
<circle cx="915.7" cy="438.6" r="2.75" fill-opacity="0.49"/>
<circle cx="920.9" cy="437.0" r="2.75" fill-opacity="0.51"/>
<circle cx="931.6" cy="417.3" r="2.75" fill-opacity="0.55"/>
<circle cx="937.1" cy="402.6" r="2.75" fill-opacity="0.59"/>
<circle cx="953.8" cy="367.2" r="2.75" fill-opacity="0.67"/>
<circle cx="959.3" cy="365.3" r="2.75" fill-opacity="0.68"/>
<circle cx="964.5" cy="370.0" r="2.75" fill-opacity="0.68"/>
<circle cx="969.5" cy="380.9" r="2.75" fill-opacity="0.68"/>
<circle cx="974.4" cy="396.5" r="2.75" fill-opacity="0.66"/>
<circle cx="979.2" cy="414.4" r="2.75" fill-opacity="0.64"/>
<circle cx="819.2" cy="366.5" r="2.75" fill-opacity="0.41"/>
<circle cx="829.2" cy="385.0" r="2.75" fill-opacity="0.40"/>
<circle cx="834.1" cy="391.2" r="2.75" fill-opacity="0.40"/>
<circle cx="839.0" cy="394.3" r="2.75" fill-opacity="0.41"/>
<circle cx="843.9" cy="394.0" r="2.75" fill-opacity="0.42"/>
<circle cx="848.7" cy="390.6" r="2.75" fill-opacity="0.43"/>
<circle cx="878.6" cy="360.2" r="2.75" fill-opacity="0.53"/>
<circle cx="893.8" cy="378.5" r="2.75" fill-opacity="0.53"/>
<circle cx="898.8" cy="388.7" r="2.75" fill-opacity="0.52"/>
<circle cx="908.7" cy="407.6" r="2.75" fill-opacity="0.51"/>
<circle cx="913.8" cy="413.9" r="2.75" fill-opacity="0.51"/>
<circle cx="918.8" cy="417.1" r="2.75" fill-opacity="0.51"/>
<circle cx="929.2" cy="413.4" r="2.75" fill-opacity="0.54"/>
<circle cx="934.5" cy="407.4" r="2.75" fill-opacity="0.55"/>
<circle cx="945.3" cy="392.8" r="2.75" fill-opacity="0.59"/>
<circle cx="950.7" cy="386.7" r="2.75" fill-opacity="0.61"/>
<circle cx="956.1" cy="383.1" r="2.75" fill-opacity="0.63"/>
<circle cx="971.8" cy="392.5" r="2.75" fill-opacity="0.64"/>
<circle cx="976.9" cy="401.5" r="2.75" fill-opacity="0.64"/>
<circle cx="827.0" cy="365.5" r="2.75" fill-opacity="0.41"/>
<circle cx="831.9" cy="366.9" r="2.75" fill-opacity="0.42"/>
<circle cx="841.7" cy="369.6" r="2.75" fill-opacity="0.43"/>
<circle cx="846.6" cy="370.9" r="2.75" fill-opacity="0.44"/>
<circle cx="851.5" cy="372.3" r="2.75" fill-opacity="0.44"/>
<circle cx="861.4" cy="375.1" r="2.75" fill-opacity="0.46"/>
<circle cx="866.4" cy="376.4" r="2.75" fill-opacity="0.46"/>
<circle cx="871.4" cy="377.8" r="2.75" fill-opacity="0.47"/>
<circle cx="876.4" cy="379.2" r="2.75" fill-opacity="0.47"/>
<circle cx="881.4" cy="380.6" r="2.75" fill-opacity="0.48"/>
<circle cx="886.4" cy="382.0" r="2.75" fill-opacity="0.49"/>
<circle cx="896.5" cy="384.8" r="2.75" fill-opacity="0.50"/>
<circle cx="906.7" cy="387.6" r="2.75" fill-opacity="0.51"/>
<circle cx="911.8" cy="389.0" r="2.75" fill-opacity="0.52"/>
<circle cx="916.9" cy="390.5" r="2.75" fill-opacity="0.53"/>
<circle cx="922.0" cy="391.9" r="2.75" fill-opacity="0.53"/>
<circle cx="947.8" cy="399.1" r="2.75" fill-opacity="0.57"/>
<circle cx="953.0" cy="400.5" r="2.75" fill-opacity="0.58"/>
<circle cx="958.2" cy="402.0" r="2.75" fill-opacity="0.58"/>
<circle cx="963.5" cy="403.4" r="2.75" fill-opacity="0.59"/>
<circle cx="968.7" cy="404.9" r="2.75" fill-opacity="0.60"/>
<circle cx="974.0" cy="406.3" r="2.75" fill-opacity="0.60"/>
<circle cx="979.3" cy="407.8" r="2.75" fill-opacity="0.61"/>
<circle cx="829.9" cy="354.6" r="2.75" fill-opacity="0.41"/>
<circle cx="834.7" cy="348.6" r="2.75" fill-opacity="0.43"/>
<circle cx="839.5" cy="345.0" r="2.75" fill-opacity="0.44"/>
<circle cx="844.4" cy="344.6" r="2.75" fill-opacity="0.45"/>
<circle cx="854.4" cy="354.0" r="2.75" fill-opacity="0.45"/>
<circle cx="859.4" cy="362.7" r="2.75" fill-opacity="0.45"/>
<circle cx="864.3" cy="372.7" r="2.75" fill-opacity="0.44"/>
<circle cx="869.3" cy="382.7" r="2.75" fill-opacity="0.44"/>
<circle cx="879.2" cy="397.6" r="2.75" fill-opacity="0.43"/>
<circle cx="884.1" cy="400.7" r="2.75" fill-opacity="0.44"/>
<circle cx="899.3" cy="391.0" r="2.75" fill-opacity="0.48"/>
<circle cx="904.4" cy="383.8" r="2.75" fill-opacity="0.50"/>
<circle cx="909.6" cy="376.5" r="2.75" fill-opacity="0.52"/>
<circle cx="925.2" cy="366.5" r="2.75" fill-opacity="0.56"/>
<circle cx="930.3" cy="369.6" r="2.75" fill-opacity="0.56"/>
<circle cx="935.4" cy="376.0" r="2.75" fill-opacity="0.56"/>
<circle cx="940.4" cy="384.9" r="2.75" fill-opacity="0.56"/>
<circle cx="945.4" cy="395.1" r="2.75" fill-opacity="0.55"/>
<circle cx="955.3" cy="414.1" r="2.75" fill-opacity="0.54"/>
<circle cx="960.3" cy="420.5" r="2.75" fill-opacity="0.54"/>
<circle cx="970.7" cy="423.5" r="2.75" fill-opacity="0.55"/>
<circle cx="987.2" cy="406.7" r="2.75" fill-opacity="0.61"/>
<circle cx="828.0" cy="359.5" r="2.75" fill-opacity="0.38"/>
<circle cx="832.7" cy="344.9" r="2.75" fill-opacity="0.41"/>
<circle cx="837.5" cy="332.7" r="2.75" fill-opacity="0.44"/>
<circle cx="842.3" cy="324.8" r="2.75" fill-opacity="0.46"/>
<circle cx="847.2" cy="322.9" r="2.75" fill-opacity="0.47"/>
<circle cx="857.2" cy="338.0" r="2.75" fill-opacity="0.46"/>
<circle cx="862.2" cy="353.0" r="2.75" fill-opacity="0.45"/>
<circle cx="872.1" cy="387.5" r="2.75" fill-opacity="0.42"/>
<circle cx="881.9" cy="412.5" r="2.75" fill-opacity="0.40"/>
<circle cx="886.8" cy="417.0" r="2.75" fill-opacity="0.40"/>
<circle cx="891.8" cy="415.3" r="2.75" fill-opacity="0.41"/>
<circle cx="896.8" cy="407.9" r="2.75" fill-opacity="0.43"/>
<circle cx="902.0" cy="395.9" r="2.75" fill-opacity="0.45"/>
<circle cx="907.2" cy="381.4" r="2.75" fill-opacity="0.49"/>
<circle cx="912.5" cy="366.6" r="2.75" fill-opacity="0.52"/>
<circle cx="917.8" cy="354.2" r="2.75" fill-opacity="0.54"/>
<circle cx="923.1" cy="346.3" r="2.75" fill-opacity="0.56"/>
<circle cx="928.3" cy="344.4" r="2.75" fill-opacity="0.58"/>
<circle cx="933.5" cy="349.0" r="2.75" fill-opacity="0.58"/>
<circle cx="943.3" cy="375.0" r="2.75" fill-opacity="0.56"/>
<circle cx="948.1" cy="392.7" r="2.75" fill-opacity="0.54"/>
<circle cx="952.8" cy="410.2" r="2.75" fill-opacity="0.52"/>
<circle cx="962.5" cy="435.6" r="2.75" fill-opacity="0.50"/>
<circle cx="972.8" cy="438.6" r="2.75" fill-opacity="0.51"/>
<circle cx="978.3" cy="431.0" r="2.75" fill-opacity="0.53"/>
<circle cx="984.0" cy="418.9" r="2.75" fill-opacity="0.56"/>
<circle cx="830.9" cy="357.2" r="2.75" fill-opacity="0.37"/>
<circle cx="840.3" cy="321.2" r="2.75" fill-opacity="0.44"/>
<circle cx="845.2" cy="310.5" r="2.75" fill-opacity="0.46"/>
<circle cx="850.1" cy="307.6" r="2.75" fill-opacity="0.48"/>
<circle cx="860.1" cy="326.5" r="2.75" fill-opacity="0.47"/>
<circle cx="865.1" cy="345.7" r="2.75" fill-opacity="0.45"/>
<circle cx="870.0" cy="368.0" r="2.75" fill-opacity="0.42"/>
<circle cx="874.9" cy="390.0" r="2.75" fill-opacity="0.40"/>
<circle cx="879.8" cy="408.7" r="2.75" fill-opacity="0.38"/>
<circle cx="884.6" cy="421.5" r="2.75" fill-opacity="0.37"/>
<circle cx="894.5" cy="424.4" r="2.75" fill-opacity="0.38"/>
<circle cx="899.5" cy="414.3" r="2.75" fill-opacity="0.40"/>
<circle cx="910.0" cy="378.9" r="2.75" fill-opacity="0.47"/>
<circle cx="915.4" cy="359.3" r="2.75" fill-opacity="0.51"/>
<circle cx="920.8" cy="342.5" r="2.75" fill-opacity="0.55"/>
<circle cx="931.4" cy="328.7" r="2.75" fill-opacity="0.58"/>
<circle cx="936.5" cy="334.4" r="2.75" fill-opacity="0.59"/>
<circle cx="941.4" cy="348.0" r="2.75" fill-opacity="0.57"/>
<circle cx="946.2" cy="367.6" r="2.75" fill-opacity="0.55"/>
<circle cx="950.8" cy="390.2" r="2.75" fill-opacity="0.53"/>
<circle cx="955.4" cy="412.6" r="2.75" fill-opacity="0.50"/>
<circle cx="969.8" cy="450.2" r="2.75" fill-opacity="0.47"/>
<circle cx="975.1" cy="447.7" r="2.75" fill-opacity="0.48"/>
<circle cx="980.6" cy="437.5" r="2.75" fill-opacity="0.51"/>
<circle cx="986.5" cy="421.3" r="2.75" fill-opacity="0.54"/>
<circle cx="992.6" cy="401.7" r="2.75" fill-opacity="0.58"/>
<circle cx="833.8" cy="354.9" r="2.75" fill-opacity="0.36"/>
<circle cx="843.2" cy="315.8" r="2.75" fill-opacity="0.43"/>
<circle cx="848.1" cy="304.0" r="2.75" fill-opacity="0.46"/>
<circle cx="853.0" cy="300.7" r="2.75" fill-opacity="0.47"/>
<circle cx="863.0" cy="321.0" r="2.75" fill-opacity="0.46"/>
<circle cx="868.0" cy="341.7" r="2.75" fill-opacity="0.44"/>
<circle cx="872.9" cy="365.6" r="2.75" fill-opacity="0.41"/>
<circle cx="887.4" cy="423.1" r="2.75" fill-opacity="0.35"/>
<circle cx="897.2" cy="425.9" r="2.75" fill-opacity="0.36"/>
<circle cx="902.2" cy="415.0" r="2.75" fill-opacity="0.39"/>
<circle cx="907.4" cy="397.6" r="2.75" fill-opacity="0.42"/>
<circle cx="912.8" cy="376.5" r="2.75" fill-opacity="0.46"/>
<circle cx="918.2" cy="355.1" r="2.75" fill-opacity="0.50"/>
<circle cx="923.6" cy="336.9" r="2.75" fill-opacity="0.54"/>
<circle cx="929.0" cy="325.0" r="2.75" fill-opacity="0.57"/>
<circle cx="934.3" cy="321.7" r="2.75" fill-opacity="0.58"/>
<circle cx="939.4" cy="327.7" r="2.75" fill-opacity="0.58"/>
<circle cx="944.3" cy="342.4" r="2.75" fill-opacity="0.57"/>
<circle cx="958.0" cy="411.8" r="2.75" fill-opacity="0.49"/>
<circle cx="962.6" cy="432.2" r="2.75" fill-opacity="0.46"/>
<circle cx="972.3" cy="452.1" r="2.75" fill-opacity="0.45"/>
<circle cx="977.5" cy="449.2" r="2.75" fill-opacity="0.47"/>
<circle cx="983.2" cy="438.1" r="2.75" fill-opacity="0.49"/>
<circle cx="989.1" cy="420.5" r="2.75" fill-opacity="0.53"/>
</g>
<g fill="#ff0000">
<circle cx="742.4" cy="390.9" r="2.75" fill-opacity="0.83"/>
<circle cx="747.1" cy="379.1" r="2.75" fill-opacity="0.85"/>
<circle cx="752.2" cy="375.6" r="2.75" fill-opacity="0.87"/>
<circle cx="757.6" cy="383.1" r="2.75" fill-opacity="0.87"/>
<circle cx="763.2" cy="397.1" r="2.75" fill-opacity="0.86"/>
<circle cx="769.1" cy="420.2" r="2.75" fill-opacity="0.83"/>
<circle cx="775.0" cy="445.5" r="2.75" fill-opacity="0.80"/>
<circle cx="786.6" cy="491.5" r="2.75" fill-opacity="0.74"/>
<circle cx="792.0" cy="502.9" r="2.75" fill-opacity="0.73"/>
<circle cx="797.3" cy="514.8" r="2.75" fill-opacity="0.72"/>
<circle cx="817.1" cy="458.9" r="2.75" fill-opacity="0.86"/>
<circle cx="822.0" cy="436.2" r="2.75" fill-opacity="0.90"/>
<circle cx="827.1" cy="416.0" r="2.75" fill-opacity="0.95"/>
<circle cx="832.4" cy="404.2" r="2.75" fill-opacity="0.98"/>
<circle cx="837.8" cy="398.2" r="2.75" fill-opacity="1.00"/>
<circle cx="843.4" cy="409.9" r="2.75" fill-opacity="0.99"/>
<circle cx="854.5" cy="442.5" r="2.75" fill-opacity="0.96"/>
<circle cx="860.0" cy="473.2" r="2.75" fill-opacity="0.92"/>
<circle cx="870.9" cy="519.5" r="2.75" fill-opacity="0.86"/>
<circle cx="887.1" cy="535.9" r="2.75" fill-opacity="0.86"/>
<circle cx="892.6" cy="525.1" r="2.75" fill-opacity="0.89"/>
<circle cx="898.3" cy="506.9" r="2.75" fill-opacity="0.93"/>
<circle cx="904.1" cy="484.5" r="2.75" fill-opacity="0.98"/>
<circle cx="737.3" cy="429.6" r="2.75" fill-opacity="0.73"/>
<circle cx="741.5" cy="408.4" r="2.75" fill-opacity="0.77"/>
<circle cx="746.0" cy="392.1" r="2.75" fill-opacity="0.81"/>
<circle cx="755.8" cy="380.6" r="2.75" fill-opacity="0.84"/>
<circle cx="761.1" cy="385.7" r="2.75" fill-opacity="0.85"/>
<circle cx="766.7" cy="396.6" r="2.75" fill-opacity="0.84"/>
<circle cx="772.4" cy="416.1" r="2.75" fill-opacity="0.82"/>
<circle cx="784.1" cy="464.5" r="2.75" fill-opacity="0.76"/>
<circle cx="789.7" cy="484.0" r="2.75" fill-opacity="0.74"/>
<circle cx="800.4" cy="504.7" r="2.75" fill-opacity="0.72"/>
<circle cx="805.4" cy="499.5" r="2.75" fill-opacity="0.74"/>
<circle cx="810.4" cy="493.0" r="2.75" fill-opacity="0.76"/>
<circle cx="815.3" cy="476.1" r="2.75" fill-opacity="0.80"/>
<circle cx="825.3" cy="436.0" r="2.75" fill-opacity="0.89"/>
<circle cx="835.7" cy="403.5" r="2.75" fill-opacity="0.96"/>
<circle cx="846.6" cy="410.1" r="2.75" fill-opacity="0.97"/>
<circle cx="857.7" cy="443.6" r="2.75" fill-opacity="0.94"/>
<circle cx="863.2" cy="470.5" r="2.75" fill-opacity="0.90"/>
<circle cx="868.6" cy="494.3" r="2.75" fill-opacity="0.87"/>
<circle cx="874.0" cy="510.6" r="2.75" fill-opacity="0.86"/>
<circle cx="879.3" cy="525.0" r="2.75" fill-opacity="0.84"/>
<circle cx="884.7" cy="530.7" r="2.75" fill-opacity="0.84"/>
<circle cx="890.1" cy="529.1" r="2.75" fill-opacity="0.86"/>
<circle cx="895.7" cy="519.4" r="2.75" fill-opacity="0.88"/>
<circle cx="901.3" cy="502.8" r="2.75" fill-opacity="0.92"/>
<circle cx="907.1" cy="483.4" r="2.75" fill-opacity="0.97"/>
<circle cx="740.7" cy="428.1" r="2.75" fill-opacity="0.71"/>
<circle cx="745.1" cy="410.4" r="2.75" fill-opacity="0.75"/>
<circle cx="754.5" cy="391.8" r="2.75" fill-opacity="0.80"/>
<circle cx="759.6" cy="391.8" r="2.75" fill-opacity="0.81"/>
<circle cx="770.4" cy="406.1" r="2.75" fill-opacity="0.81"/>
<circle cx="776.0" cy="423.1" r="2.75" fill-opacity="0.79"/>
<circle cx="781.7" cy="441.7" r="2.75" fill-opacity="0.77"/>
<circle cx="798.1" cy="484.6" r="2.75" fill-opacity="0.73"/>
<circle cx="808.4" cy="488.9" r="2.75" fill-opacity="0.74"/>
<circle cx="813.5" cy="482.0" r="2.75" fill-opacity="0.76"/>
<circle cx="823.4" cy="450.2" r="2.75" fill-opacity="0.83"/>
<circle cx="828.5" cy="434.6" r="2.75" fill-opacity="0.87"/>
<circle cx="833.8" cy="424.1" r="2.75" fill-opacity="0.90"/>
<circle cx="844.4" cy="412.0" r="2.75" fill-opacity="0.94"/>
<circle cx="849.9" cy="420.1" r="2.75" fill-opacity="0.94"/>
<circle cx="855.4" cy="430.8" r="2.75" fill-opacity="0.93"/>
<circle cx="860.9" cy="444.8" r="2.75" fill-opacity="0.92"/>
<circle cx="866.3" cy="465.1" r="2.75" fill-opacity="0.89"/>
<circle cx="882.5" cy="509.6" r="2.75" fill-opacity="0.85"/>
<circle cx="893.2" cy="518.5" r="2.75" fill-opacity="0.86"/>
<circle cx="904.5" cy="493.6" r="2.75" fill-opacity="0.92"/>
<circle cx="910.2" cy="479.4" r="2.75" fill-opacity="0.95"/>
<circle cx="744.0" cy="425.1" r="2.75" fill-opacity="0.70"/>
<circle cx="758.6" cy="410.1" r="2.75" fill-opacity="0.75"/>
<circle cx="763.6" cy="408.6" r="2.75" fill-opacity="0.76"/>
<circle cx="768.8" cy="409.8" r="2.75" fill-opacity="0.77"/>
<circle cx="774.1" cy="416.5" r="2.75" fill-opacity="0.77"/>
<circle cx="779.4" cy="425.5" r="2.75" fill-opacity="0.77"/>
<circle cx="784.8" cy="435.9" r="2.75" fill-opacity="0.76"/>
<circle cx="795.6" cy="455.3" r="2.75" fill-opacity="0.75"/>
<circle cx="800.9" cy="463.0" r="2.75" fill-opacity="0.75"/>
<circle cx="806.1" cy="467.3" r="2.75" fill-opacity="0.75"/>
<circle cx="811.3" cy="467.7" r="2.75" fill-opacity="0.76"/>
<circle cx="816.4" cy="464.0" r="2.75" fill-opacity="0.77"/>
<circle cx="821.5" cy="458.8" r="2.75" fill-opacity="0.79"/>
<circle cx="837.1" cy="437.7" r="2.75" fill-opacity="0.86"/>
<circle cx="842.4" cy="432.7" r="2.75" fill-opacity="0.88"/>
<circle cx="847.8" cy="435.9" r="2.75" fill-opacity="0.88"/>
<circle cx="858.6" cy="444.5" r="2.75" fill-opacity="0.89"/>
<circle cx="869.4" cy="464.0" r="2.75" fill-opacity="0.88"/>
<circle cx="874.8" cy="472.7" r="2.75" fill-opacity="0.87"/>
<circle cx="880.2" cy="481.2" r="2.75" fill-opacity="0.87"/>
<circle cx="885.6" cy="489.1" r="2.75" fill-opacity="0.87"/>
<circle cx="891.0" cy="493.1" r="2.75" fill-opacity="0.87"/>
<circle cx="896.5" cy="493.7" r="2.75" fill-opacity="0.88"/>
<circle cx="902.0" cy="487.7" r="2.75" fill-opacity="0.90"/>
<circle cx="907.6" cy="482.3" r="2.75" fill-opacity="0.92"/>
<circle cx="913.2" cy="476.9" r="2.75" fill-opacity="0.94"/>
<circle cx="747.3" cy="422.4" r="2.75" fill-opacity="0.69"/>
<circle cx="752.4" cy="423.2" r="2.75" fill-opacity="0.70"/>
<circle cx="757.4" cy="424.0" r="2.75" fill-opacity="0.70"/>
<circle cx="762.5" cy="427.4" r="2.75" fill-opacity="0.71"/>
<circle cx="767.5" cy="426.1" r="2.75" fill-opacity="0.72"/>
<circle cx="777.8" cy="429.7" r="2.75" fill-opacity="0.73"/>
<circle cx="783.0" cy="433.7" r="2.75" fill-opacity="0.74"/>
<circle cx="788.1" cy="434.8" r="2.75" fill-opacity="0.74"/>
<circle cx="793.3" cy="437.5" r="2.75" fill-opacity="0.75"/>
<circle cx="808.9" cy="442.2" r="2.75" fill-opacity="0.77"/>
<circle cx="814.1" cy="441.8" r="2.75" fill-opacity="0.78"/>
<circle cx="819.3" cy="441.7" r="2.75" fill-opacity="0.79"/>
<circle cx="829.8" cy="444.8" r="2.75" fill-opacity="0.81"/>
<circle cx="840.4" cy="449.9" r="2.75" fill-opacity="0.82"/>
<circle cx="845.8" cy="452.4" r="2.75" fill-opacity="0.83"/>
<circle cx="851.1" cy="454.4" r="2.75" fill-opacity="0.83"/>
<circle cx="856.4" cy="454.3" r="2.75" fill-opacity="0.84"/>
<circle cx="861.8" cy="457.3" r="2.75" fill-opacity="0.85"/>
<circle cx="867.2" cy="457.1" r="2.75" fill-opacity="0.86"/>
<circle cx="872.6" cy="460.0" r="2.75" fill-opacity="0.87"/>
<circle cx="878.0" cy="461.0" r="2.75" fill-opacity="0.87"/>
<circle cx="883.4" cy="463.9" r="2.75" fill-opacity="0.88"/>
<circle cx="894.3" cy="463.2" r="2.75" fill-opacity="0.90"/>
<circle cx="899.8" cy="466.2" r="2.75" fill-opacity="0.91"/>
<circle cx="905.2" cy="469.5" r="2.75" fill-opacity="0.91"/>
<circle cx="910.7" cy="472.6" r="2.75" fill-opacity="0.92"/>
<circle cx="916.3" cy="472.0" r="2.75" fill-opacity="0.93"/>
<circle cx="750.6" cy="418.5" r="2.75" fill-opacity="0.68"/>
<circle cx="756.0" cy="431.7" r="2.75" fill-opacity="0.67"/>
<circle cx="761.3" cy="438.9" r="2.75" fill-opacity="0.66"/>
<circle cx="766.4" cy="442.5" r="2.75" fill-opacity="0.67"/>
<circle cx="771.6" cy="448.6" r="2.75" fill-opacity="0.67"/>
<circle cx="776.6" cy="449.3" r="2.75" fill-opacity="0.68"/>
<circle cx="781.5" cy="444.3" r="2.75" fill-opacity="0.69"/>
<circle cx="786.4" cy="436.4" r="2.75" fill-opacity="0.72"/>
<circle cx="796.3" cy="425.0" r="2.75" fill-opacity="0.75"/>
<circle cx="806.5" cy="415.2" r="2.75" fill-opacity="0.79"/>
<circle cx="811.7" cy="414.6" r="2.75" fill-opacity="0.80"/>
<circle cx="816.9" cy="417.5" r="2.75" fill-opacity="0.81"/>
<circle cx="822.2" cy="422.5" r="2.75" fill-opacity="0.81"/>
<circle cx="827.6" cy="433.1" r="2.75" fill-opacity="0.80"/>
<circle cx="833.0" cy="447.6" r="2.75" fill-opacity="0.79"/>
<circle cx="843.7" cy="463.4" r="2.75" fill-opacity="0.78"/>
<circle cx="849.0" cy="470.1" r="2.75" fill-opacity="0.78"/>
<circle cx="854.3" cy="473.1" r="2.75" fill-opacity="0.78"/>
<circle cx="859.6" cy="473.5" r="2.75" fill-opacity="0.79"/>
<circle cx="864.9" cy="470.6" r="2.75" fill-opacity="0.81"/>
<circle cx="870.3" cy="463.6" r="2.75" fill-opacity="0.83"/>
<circle cx="875.6" cy="458.0" r="2.75" fill-opacity="0.85"/>
<circle cx="881.1" cy="452.0" r="2.75" fill-opacity="0.87"/>
<circle cx="886.6" cy="443.8" r="2.75" fill-opacity="0.90"/>
<circle cx="892.1" cy="441.3" r="2.75" fill-opacity="0.91"/>
<circle cx="897.6" cy="436.7" r="2.75" fill-opacity="0.93"/>
<circle cx="908.5" cy="449.9" r="2.75" fill-opacity="0.93"/>
<circle cx="914.0" cy="456.7" r="2.75" fill-opacity="0.93"/>
<circle cx="919.3" cy="472.1" r="2.75" fill-opacity="0.91"/>
<circle cx="754.0" cy="418.8" r="2.75" fill-opacity="0.66"/>
<circle cx="759.5" cy="434.2" r="2.75" fill-opacity="0.64"/>
<circle cx="765.0" cy="452.7" r="2.75" fill-opacity="0.62"/>
<circle cx="775.4" cy="466.5" r="2.75" fill-opacity="0.62"/>
<circle cx="780.4" cy="466.8" r="2.75" fill-opacity="0.63"/>
<circle cx="785.1" cy="455.7" r="2.75" fill-opacity="0.66"/>
<circle cx="789.9" cy="446.7" r="2.75" fill-opacity="0.68"/>
<circle cx="794.6" cy="429.4" r="2.75" fill-opacity="0.72"/>
<circle cx="799.4" cy="416.8" r="2.75" fill-opacity="0.75"/>
<circle cx="804.3" cy="400.5" r="2.75" fill-opacity="0.79"/>
<circle cx="819.8" cy="394.5" r="2.75" fill-opacity="0.83"/>
<circle cx="825.3" cy="407.2" r="2.75" fill-opacity="0.81"/>
<circle cx="836.2" cy="443.1" r="2.75" fill-opacity="0.78"/>
<circle cx="846.9" cy="474.7" r="2.75" fill-opacity="0.74"/>
<circle cx="857.4" cy="489.6" r="2.75" fill-opacity="0.74"/>
<circle cx="862.7" cy="488.3" r="2.75" fill-opacity="0.75"/>
<circle cx="868.0" cy="479.9" r="2.75" fill-opacity="0.78"/>
<circle cx="873.3" cy="466.5" r="2.75" fill-opacity="0.81"/>
<circle cx="889.7" cy="425.7" r="2.75" fill-opacity="0.91"/>
<circle cx="895.3" cy="418.3" r="2.75" fill-opacity="0.93"/>
<circle cx="906.3" cy="422.1" r="2.75" fill-opacity="0.95"/>
<circle cx="917.1" cy="448.6" r="2.75" fill-opacity="0.92"/>
<circle cx="922.3" cy="467.6" r="2.75" fill-opacity="0.90"/>
<circle cx="757.2" cy="415.3" r="2.75" fill-opacity="0.65"/>
<circle cx="762.9" cy="436.8" r="2.75" fill-opacity="0.62"/>
<circle cx="768.4" cy="453.8" r="2.75" fill-opacity="0.61"/>
<circle cx="773.8" cy="471.2" r="2.75" fill-opacity="0.59"/>
<circle cx="778.9" cy="476.5" r="2.75" fill-opacity="0.59"/>
<circle cx="783.8" cy="473.7" r="2.75" fill-opacity="0.60"/>
<circle cx="788.5" cy="464.4" r="2.75" fill-opacity="0.63"/>
<circle cx="793.1" cy="444.9" r="2.75" fill-opacity="0.67"/>
<circle cx="797.8" cy="426.8" r="2.75" fill-opacity="0.71"/>
<circle cx="807.3" cy="388.2" r="2.75" fill-opacity="0.79"/>
<circle cx="812.4" cy="380.5" r="2.75" fill-opacity="0.81"/>
<circle cx="822.9" cy="380.1" r="2.75" fill-opacity="0.83"/>
<circle cx="828.3" cy="395.4" r="2.75" fill-opacity="0.82"/>
<circle cx="839.3" cy="441.2" r="2.75" fill-opacity="0.76"/>
<circle cx="844.7" cy="460.8" r="2.75" fill-opacity="0.74"/>
<circle cx="855.3" cy="494.0" r="2.75" fill-opacity="0.71"/>
<circle cx="860.5" cy="500.9" r="2.75" fill-opacity="0.70"/>
<circle cx="865.7" cy="498.0" r="2.75" fill-opacity="0.72"/>
<circle cx="871.0" cy="489.7" r="2.75" fill-opacity="0.74"/>
<circle cx="887.3" cy="429.4" r="2.75" fill-opacity="0.87"/>
<circle cx="892.9" cy="414.0" r="2.75" fill-opacity="0.91"/>
<circle cx="898.5" cy="401.6" r="2.75" fill-opacity="0.94"/>
<circle cx="904.1" cy="398.4" r="2.75" fill-opacity="0.96"/>
<circle cx="909.6" cy="404.7" r="2.75" fill-opacity="0.96"/>
<circle cx="914.9" cy="421.1" r="2.75" fill-opacity="0.94"/>
<circle cx="920.2" cy="440.2" r="2.75" fill-opacity="0.92"/>
<circle cx="925.3" cy="464.2" r="2.75" fill-opacity="0.89"/>
<circle cx="760.4" cy="410.2" r="2.75" fill-opacity="0.64"/>
<circle cx="766.2" cy="437.6" r="2.75" fill-opacity="0.61"/>
<circle cx="771.7" cy="455.8" r="2.75" fill-opacity="0.59"/>
<circle cx="782.2" cy="476.9" r="2.75" fill-opacity="0.57"/>
<circle cx="787.0" cy="474.6" r="2.75" fill-opacity="0.59"/>
<circle cx="791.7" cy="460.6" r="2.75" fill-opacity="0.62"/>
<circle cx="796.3" cy="444.4" r="2.75" fill-opacity="0.65"/>
<circle cx="805.6" cy="402.8" r="2.75" fill-opacity="0.74"/>
<circle cx="810.4" cy="382.7" r="2.75" fill-opacity="0.78"/>
<circle cx="815.5" cy="372.2" r="2.75" fill-opacity="0.81"/>
<circle cx="820.7" cy="369.5" r="2.75" fill-opacity="0.82"/>
<circle cx="831.5" cy="389.9" r="2.75" fill-opacity="0.81"/>
<circle cx="837.0" cy="411.8" r="2.75" fill-opacity="0.78"/>
<circle cx="847.8" cy="458.6" r="2.75" fill-opacity="0.73"/>
<circle cx="858.3" cy="495.6" r="2.75" fill-opacity="0.69"/>
<circle cx="868.8" cy="503.7" r="2.75" fill-opacity="0.69"/>
<circle cx="874.0" cy="489.0" r="2.75" fill-opacity="0.73"/>
<circle cx="884.8" cy="449.9" r="2.75" fill-opacity="0.81"/>
<circle cx="890.4" cy="426.7" r="2.75" fill-opacity="0.86"/>
<circle cx="896.0" cy="407.2" r="2.75" fill-opacity="0.90"/>
<circle cx="901.6" cy="395.1" r="2.75" fill-opacity="0.93"/>
<circle cx="912.7" cy="397.6" r="2.75" fill-opacity="0.95"/>
<circle cx="923.2" cy="437.2" r="2.75" fill-opacity="0.90"/>
<circle cx="769.2" cy="430.0" r="2.75" fill-opacity="0.60"/>
<circle cx="774.8" cy="451.6" r="2.75" fill-opacity="0.58"/>
<circle cx="780.1" cy="462.9" r="2.75" fill-opacity="0.57"/>
<circle cx="785.2" cy="470.6" r="2.75" fill-opacity="0.57"/>
<circle cx="790.1" cy="467.1" r="2.75" fill-opacity="0.58"/>
<circle cx="794.8" cy="459.0" r="2.75" fill-opacity="0.60"/>
<circle cx="799.4" cy="439.5" r="2.75" fill-opacity="0.64"/>
<circle cx="804.1" cy="420.9" r="2.75" fill-opacity="0.68"/>
<circle cx="808.8" cy="401.8" r="2.75" fill-opacity="0.72"/>
<circle cx="818.7" cy="372.3" r="2.75" fill-opacity="0.79"/>
<circle cx="829.2" cy="375.1" r="2.75" fill-opacity="0.81"/>
<circle cx="834.7" cy="392.4" r="2.75" fill-opacity="0.79"/>
<circle cx="840.1" cy="411.4" r="2.75" fill-opacity="0.77"/>
<circle cx="856.1" cy="477.8" r="2.75" fill-opacity="0.69"/>
<circle cx="866.6" cy="494.4" r="2.75" fill-opacity="0.68"/>
<circle cx="871.8" cy="492.8" r="2.75" fill-opacity="0.69"/>
<circle cx="877.0" cy="483.7" r="2.75" fill-opacity="0.72"/>
<circle cx="882.4" cy="467.2" r="2.75" fill-opacity="0.75"/>
<circle cx="893.4" cy="425.7" r="2.75" fill-opacity="0.84"/>
<circle cx="899.0" cy="411.9" r="2.75" fill-opacity="0.88"/>
<circle cx="904.6" cy="397.3" r="2.75" fill-opacity="0.91"/>
<circle cx="910.2" cy="391.5" r="2.75" fill-opacity="0.93"/>
<circle cx="915.6" cy="402.3" r="2.75" fill-opacity="0.92"/>
<circle cx="926.1" cy="437.0" r="2.75" fill-opacity="0.89"/>
<circle cx="931.2" cy="460.6" r="2.75" fill-opacity="0.86"/>
<circle cx="772.3" cy="423.9" r="2.75" fill-opacity="0.60"/>
<circle cx="777.7" cy="440.9" r="2.75" fill-opacity="0.58"/>
<circle cx="782.9" cy="447.6" r="2.75" fill-opacity="0.58"/>
<circle cx="788.0" cy="455.3" r="2.75" fill-opacity="0.57"/>
<circle cx="792.9" cy="454.1" r="2.75" fill-opacity="0.59"/>
<circle cx="797.8" cy="447.4" r="2.75" fill-opacity="0.61"/>
<circle cx="802.5" cy="432.6" r="2.75" fill-opacity="0.64"/>
<circle cx="807.2" cy="417.1" r="2.75" fill-opacity="0.67"/>
<circle cx="812.1" cy="403.4" r="2.75" fill-opacity="0.70"/>
<circle cx="817.0" cy="389.0" r="2.75" fill-opacity="0.74"/>
<circle cx="827.2" cy="379.1" r="2.75" fill-opacity="0.77"/>
<circle cx="832.5" cy="385.3" r="2.75" fill-opacity="0.77"/>
<circle cx="837.9" cy="396.9" r="2.75" fill-opacity="0.76"/>
<circle cx="859.1" cy="465.2" r="2.75" fill-opacity="0.69"/>
<circle cx="864.4" cy="474.8" r="2.75" fill-opacity="0.69"/>
<circle cx="869.6" cy="480.5" r="2.75" fill-opacity="0.69"/>
<circle cx="874.8" cy="476.1" r="2.75" fill-opacity="0.70"/>
<circle cx="880.1" cy="469.5" r="2.75" fill-opacity="0.72"/>
<circle cx="885.4" cy="458.6" r="2.75" fill-opacity="0.75"/>
<circle cx="890.9" cy="443.9" r="2.75" fill-opacity="0.79"/>
<circle cx="896.4" cy="427.4" r="2.75" fill-opacity="0.82"/>
<circle cx="902.0" cy="413.6" r="2.75" fill-opacity="0.86"/>
<circle cx="907.5" cy="406.6" r="2.75" fill-opacity="0.88"/>
<circle cx="918.5" cy="408.5" r="2.75" fill-opacity="0.90"/>
<circle cx="923.8" cy="422.2" r="2.75" fill-opacity="0.88"/>
<circle cx="929.0" cy="437.2" r="2.75" fill-opacity="0.87"/>
<circle cx="934.2" cy="455.0" r="2.75" fill-opacity="0.85"/>
<circle cx="770.0" cy="404.0" r="2.75" fill-opacity="0.60"/>
<circle cx="775.3" cy="414.0" r="2.75" fill-opacity="0.60"/>
<circle cx="780.5" cy="421.9" r="2.75" fill-opacity="0.59"/>
<circle cx="785.6" cy="429.9" r="2.75" fill-opacity="0.59"/>
<circle cx="790.6" cy="431.6" r="2.75" fill-opacity="0.60"/>
<circle cx="810.4" cy="416.9" r="2.75" fill-opacity="0.66"/>
<circle cx="815.3" cy="407.9" r="2.75" fill-opacity="0.68"/>
<circle cx="820.4" cy="403.2" r="2.75" fill-opacity="0.70"/>
<circle cx="825.5" cy="399.5" r="2.75" fill-opacity="0.71"/>
<circle cx="830.6" cy="397.7" r="2.75" fill-opacity="0.73"/>
<circle cx="835.8" cy="399.9" r="2.75" fill-opacity="0.73"/>
<circle cx="841.1" cy="408.7" r="2.75" fill-opacity="0.73"/>
<circle cx="851.7" cy="428.0" r="2.75" fill-opacity="0.72"/>
<circle cx="856.9" cy="436.6" r="2.75" fill-opacity="0.71"/>
<circle cx="872.6" cy="458.8" r="2.75" fill-opacity="0.70"/>
<circle cx="877.9" cy="456.0" r="2.75" fill-opacity="0.72"/>
<circle cx="883.1" cy="455.7" r="2.75" fill-opacity="0.73"/>
<circle cx="899.3" cy="435.9" r="2.75" fill-opacity="0.79"/>
<circle cx="904.8" cy="426.3" r="2.75" fill-opacity="0.82"/>
<circle cx="910.2" cy="423.6" r="2.75" fill-opacity="0.83"/>
<circle cx="915.7" cy="423.7" r="2.75" fill-opacity="0.84"/>
<circle cx="926.4" cy="436.8" r="2.75" fill-opacity="0.84"/>
<circle cx="931.8" cy="441.9" r="2.75" fill-opacity="0.84"/>
<circle cx="937.0" cy="453.9" r="2.75" fill-opacity="0.83"/>
<circle cx="773.3" cy="403.4" r="2.75" fill-opacity="0.59"/>
<circle cx="778.2" cy="403.3" r="2.75" fill-opacity="0.60"/>
<circle cx="788.3" cy="407.9" r="2.75" fill-opacity="0.61"/>
<circle cx="793.3" cy="408.7" r="2.75" fill-opacity="0.62"/>
<circle cx="798.3" cy="410.2" r="2.75" fill-opacity="0.62"/>
<circle cx="803.3" cy="409.0" r="2.75" fill-opacity="0.63"/>
<circle cx="808.4" cy="412.2" r="2.75" fill-opacity="0.64"/>
<circle cx="813.5" cy="411.5" r="2.75" fill-opacity="0.65"/>
<circle cx="818.6" cy="416.2" r="2.75" fill-opacity="0.65"/>
<circle cx="828.9" cy="419.8" r="2.75" fill-opacity="0.66"/>
<circle cx="839.1" cy="418.3" r="2.75" fill-opacity="0.69"/>
<circle cx="844.3" cy="424.6" r="2.75" fill-opacity="0.68"/>
<circle cx="849.5" cy="422.1" r="2.75" fill-opacity="0.70"/>
<circle cx="854.7" cy="427.2" r="2.75" fill-opacity="0.70"/>
<circle cx="859.9" cy="425.9" r="2.75" fill-opacity="0.71"/>
<circle cx="865.2" cy="429.7" r="2.75" fill-opacity="0.72"/>
<circle cx="875.7" cy="429.3" r="2.75" fill-opacity="0.74"/>
<circle cx="880.9" cy="430.1" r="2.75" fill-opacity="0.74"/>
<circle cx="886.2" cy="433.1" r="2.75" fill-opacity="0.75"/>
<circle cx="891.5" cy="435.7" r="2.75" fill-opacity="0.75"/>
<circle cx="912.9" cy="443.1" r="2.75" fill-opacity="0.78"/>
<circle cx="923.7" cy="444.4" r="2.75" fill-opacity="0.80"/>
<circle cx="929.2" cy="444.0" r="2.75" fill-opacity="0.81"/>
<circle cx="934.5" cy="449.5" r="2.75" fill-opacity="0.81"/>
<circle cx="939.9" cy="452.2" r="2.75" fill-opacity="0.82"/>
<circle cx="776.3" cy="396.5" r="2.75" fill-opacity="0.58"/>
<circle cx="781.2" cy="392.1" r="2.75" fill-opacity="0.60"/>
<circle cx="790.8" cy="381.0" r="2.75" fill-opacity="0.63"/>
<circle cx="795.9" cy="381.5" r="2.75" fill-opacity="0.64"/>
<circle cx="806.2" cy="391.1" r="2.75" fill-opacity="0.65"/>
<circle cx="811.4" cy="400.9" r="2.75" fill-opacity="0.64"/>
<circle cx="816.6" cy="411.1" r="2.75" fill-opacity="0.63"/>
<circle cx="821.9" cy="423.7" r="2.75" fill-opacity="0.62"/>
<circle cx="827.0" cy="431.0" r="2.75" fill-opacity="0.62"/>
<circle cx="832.2" cy="437.9" r="2.75" fill-opacity="0.62"/>
<circle cx="837.3" cy="438.2" r="2.75" fill-opacity="0.63"/>
<circle cx="842.4" cy="440.1" r="2.75" fill-opacity="0.63"/>
<circle cx="847.5" cy="436.0" r="2.75" fill-opacity="0.65"/>
<circle cx="852.6" cy="432.8" r="2.75" fill-opacity="0.66"/>
<circle cx="857.7" cy="422.7" r="2.75" fill-opacity="0.69"/>
<circle cx="868.2" cy="406.9" r="2.75" fill-opacity="0.74"/>
<circle cx="884.0" cy="408.4" r="2.75" fill-opacity="0.76"/>
<circle cx="889.3" cy="414.0" r="2.75" fill-opacity="0.76"/>
<circle cx="894.6" cy="425.0" r="2.75" fill-opacity="0.75"/>
<circle cx="899.8" cy="436.0" r="2.75" fill-opacity="0.75"/>
<circle cx="905.1" cy="444.1" r="2.75" fill-opacity="0.74"/>
<circle cx="915.5" cy="462.1" r="2.75" fill-opacity="0.73"/>
<circle cx="920.8" cy="466.3" r="2.75" fill-opacity="0.74"/>
<circle cx="926.2" cy="464.7" r="2.75" fill-opacity="0.75"/>
<circle cx="937.2" cy="455.7" r="2.75" fill-opacity="0.78"/>
<circle cx="942.9" cy="446.0" r="2.75" fill-opacity="0.81"/>
<circle cx="784.1" cy="380.7" r="2.75" fill-opacity="0.60"/>
<circle cx="793.7" cy="363.4" r="2.75" fill-opacity="0.64"/>
<circle cx="798.6" cy="358.5" r="2.75" fill-opacity="0.66"/>
<circle cx="803.8" cy="366.1" r="2.75" fill-opacity="0.66"/>
<circle cx="809.0" cy="374.7" r="2.75" fill-opacity="0.66"/>
<circle cx="814.4" cy="389.6" r="2.75" fill-opacity="0.64"/>
<circle cx="819.7" cy="409.1" r="2.75" fill-opacity="0.62"/>
<circle cx="830.2" cy="442.0" r="2.75" fill-opacity="0.59"/>
<circle cx="835.4" cy="450.7" r="2.75" fill-opacity="0.58"/>
<circle cx="840.5" cy="457.0" r="2.75" fill-opacity="0.58"/>
<circle cx="845.5" cy="456.5" r="2.75" fill-opacity="0.59"/>
<circle cx="855.6" cy="432.6" r="2.75" fill-opacity="0.65"/>
<circle cx="866.0" cy="403.8" r="2.75" fill-opacity="0.71"/>
<circle cx="871.2" cy="391.7" r="2.75" fill-opacity="0.74"/>
<circle cx="881.9" cy="381.9" r="2.75" fill-opacity="0.78"/>
<circle cx="887.2" cy="385.7" r="2.75" fill-opacity="0.78"/>
<circle cx="897.6" cy="414.1" r="2.75" fill-opacity="0.76"/>
<circle cx="907.9" cy="449.3" r="2.75" fill-opacity="0.72"/>
<circle cx="918.1" cy="476.2" r="2.75" fill-opacity="0.69"/>
<circle cx="928.7" cy="480.9" r="2.75" fill-opacity="0.71"/>
<circle cx="934.3" cy="470.6" r="2.75" fill-opacity="0.73"/>
<circle cx="939.9" cy="459.6" r="2.75" fill-opacity="0.76"/>
<circle cx="945.7" cy="446.1" r="2.75" fill-opacity="0.79"/>
<circle cx="782.7" cy="394.8" r="2.75" fill-opacity="0.55"/>
<circle cx="787.2" cy="377.9" r="2.75" fill-opacity="0.59"/>
<circle cx="791.8" cy="359.9" r="2.75" fill-opacity="0.63"/>
<circle cx="796.5" cy="348.6" r="2.75" fill-opacity="0.65"/>
<circle cx="801.5" cy="342.3" r="2.75" fill-opacity="0.67"/>
<circle cx="806.7" cy="348.2" r="2.75" fill-opacity="0.67"/>
<circle cx="812.0" cy="361.2" r="2.75" fill-opacity="0.66"/>
<circle cx="817.4" cy="382.2" r="2.75" fill-opacity="0.64"/>
<circle cx="822.7" cy="403.2" r="2.75" fill-opacity="0.61"/>
<circle cx="828.1" cy="429.1" r="2.75" fill-opacity="0.58"/>
<circle cx="833.4" cy="448.8" r="2.75" fill-opacity="0.56"/>
<circle cx="843.6" cy="468.0" r="2.75" fill-opacity="0.55"/>
<circle cx="848.6" cy="463.8" r="2.75" fill-opacity="0.56"/>
<circle cx="858.7" cy="438.4" r="2.75" fill-opacity="0.62"/>
<circle cx="863.8" cy="419.1" r="2.75" fill-opacity="0.66"/>
<circle cx="869.0" cy="398.3" r="2.75" fill-opacity="0.71"/>
<circle cx="874.3" cy="380.2" r="2.75" fill-opacity="0.74"/>
<circle cx="879.6" cy="371.3" r="2.75" fill-opacity="0.77"/>
<circle cx="885.0" cy="366.4" r="2.75" fill-opacity="0.79"/>
<circle cx="890.3" cy="372.3" r="2.75" fill-opacity="0.79"/>
<circle cx="895.5" cy="383.7" r="2.75" fill-opacity="0.78"/>
<circle cx="905.7" cy="429.6" r="2.75" fill-opacity="0.72"/>
<circle cx="910.7" cy="454.8" r="2.75" fill-opacity="0.69"/>
<circle cx="915.7" cy="472.1" r="2.75" fill-opacity="0.67"/>
<circle cx="920.8" cy="485.7" r="2.75" fill-opacity="0.66"/>
<circle cx="931.3" cy="491.1" r="2.75" fill-opacity="0.67"/>
<circle cx="936.8" cy="483.4" r="2.75" fill-opacity="0.69"/>
<circle cx="942.7" cy="461.2" r="2.75" fill-opacity="0.74"/>
<circle cx="948.6" cy="442.5" r="2.75" fill-opacity="0.78"/>
<circle cx="785.8" cy="392.9" r="2.75" fill-opacity="0.54"/>
<circle cx="790.2" cy="370.4" r="2.75" fill-opacity="0.58"/>
<circle cx="799.5" cy="337.8" r="2.75" fill-opacity="0.65"/>
<circle cx="804.5" cy="333.7" r="2.75" fill-opacity="0.67"/>
<circle cx="809.8" cy="343.2" r="2.75" fill-opacity="0.66"/>
<circle cx="815.0" cy="355.0" r="2.75" fill-opacity="0.65"/>
<circle cx="820.5" cy="378.8" r="2.75" fill-opacity="0.63"/>
<circle cx="825.8" cy="403.3" r="2.75" fill-opacity="0.60"/>
<circle cx="831.2" cy="427.8" r="2.75" fill-opacity="0.57"/>
<circle cx="836.4" cy="448.4" r="2.75" fill-opacity="0.54"/>
<circle cx="841.5" cy="462.8" r="2.75" fill-opacity="0.53"/>
<circle cx="846.6" cy="469.5" r="2.75" fill-opacity="0.53"/>
<circle cx="851.6" cy="465.6" r="2.75" fill-opacity="0.55"/>
<circle cx="856.6" cy="455.9" r="2.75" fill-opacity="0.57"/>
<circle cx="861.6" cy="435.8" r="2.75" fill-opacity="0.61"/>
<circle cx="866.8" cy="416.1" r="2.75" fill-opacity="0.65"/>
<circle cx="872.0" cy="392.5" r="2.75" fill-opacity="0.70"/>
<circle cx="877.3" cy="374.8" r="2.75" fill-opacity="0.74"/>
<circle cx="882.6" cy="365.2" r="2.75" fill-opacity="0.76"/>
<circle cx="898.5" cy="378.6" r="2.75" fill-opacity="0.77"/>
<circle cx="903.6" cy="401.7" r="2.75" fill-opacity="0.74"/>
<circle cx="908.6" cy="427.3" r="2.75" fill-opacity="0.71"/>
<circle cx="918.5" cy="473.5" r="2.75" fill-opacity="0.66"/>
<circle cx="928.8" cy="490.9" r="2.75" fill-opacity="0.65"/>
<circle cx="934.1" cy="491.0" r="2.75" fill-opacity="0.66"/>
<circle cx="945.5" cy="459.9" r="2.75" fill-opacity="0.73"/>
<circle cx="951.5" cy="439.3" r="2.75" fill-opacity="0.77"/>
<circle cx="789.0" cy="391.3" r="2.75" fill-opacity="0.53"/>
<circle cx="802.8" cy="340.6" r="2.75" fill-opacity="0.63"/>
<circle cx="807.8" cy="341.1" r="2.75" fill-opacity="0.64"/>
<circle cx="812.9" cy="343.8" r="2.75" fill-opacity="0.65"/>
<circle cx="823.5" cy="377.4" r="2.75" fill-opacity="0.61"/>
<circle cx="828.9" cy="400.5" r="2.75" fill-opacity="0.59"/>
<circle cx="839.4" cy="443.7" r="2.75" fill-opacity="0.54"/>
<circle cx="854.5" cy="456.8" r="2.75" fill-opacity="0.54"/>
<circle cx="859.5" cy="446.0" r="2.75" fill-opacity="0.57"/>
<circle cx="869.8" cy="414.0" r="2.75" fill-opacity="0.64"/>
<circle cx="875.0" cy="393.1" r="2.75" fill-opacity="0.68"/>
<circle cx="891.0" cy="358.8" r="2.75" fill-opacity="0.76"/>
<circle cx="896.2" cy="367.9" r="2.75" fill-opacity="0.76"/>
<circle cx="901.5" cy="379.8" r="2.75" fill-opacity="0.75"/>
<circle cx="906.5" cy="402.9" r="2.75" fill-opacity="0.72"/>
<circle cx="911.5" cy="425.6" r="2.75" fill-opacity="0.70"/>
<circle cx="916.5" cy="447.2" r="2.75" fill-opacity="0.67"/>
<circle cx="921.5" cy="466.4" r="2.75" fill-opacity="0.65"/>
<circle cx="926.4" cy="482.7" r="2.75" fill-opacity="0.63"/>
<circle cx="937.0" cy="485.3" r="2.75" fill-opacity="0.65"/>
<circle cx="942.6" cy="472.6" r="2.75" fill-opacity="0.68"/>
<circle cx="948.4" cy="455.0" r="2.75" fill-opacity="0.72"/>
<circle cx="954.3" cy="436.1" r="2.75" fill-opacity="0.76"/>
<circle cx="796.6" cy="371.6" r="2.75" fill-opacity="0.55"/>
<circle cx="801.3" cy="358.9" r="2.75" fill-opacity="0.58"/>
<circle cx="806.2" cy="353.5" r="2.75" fill-opacity="0.60"/>
<circle cx="811.1" cy="349.1" r="2.75" fill-opacity="0.61"/>
<circle cx="816.2" cy="353.1" r="2.75" fill-opacity="0.62"/>
<circle cx="821.4" cy="364.3" r="2.75" fill-opacity="0.61"/>
<circle cx="826.7" cy="382.3" r="2.75" fill-opacity="0.59"/>
<circle cx="831.9" cy="399.8" r="2.75" fill-opacity="0.57"/>
<circle cx="842.3" cy="429.4" r="2.75" fill-opacity="0.54"/>
<circle cx="847.4" cy="443.6" r="2.75" fill-opacity="0.53"/>
<circle cx="852.4" cy="447.7" r="2.75" fill-opacity="0.53"/>
<circle cx="862.5" cy="434.6" r="2.75" fill-opacity="0.57"/>
<circle cx="867.6" cy="426.2" r="2.75" fill-opacity="0.59"/>
<circle cx="872.7" cy="411.1" r="2.75" fill-opacity="0.63"/>
<circle cx="877.9" cy="394.1" r="2.75" fill-opacity="0.66"/>
<circle cx="883.2" cy="381.2" r="2.75" fill-opacity="0.69"/>
<circle cx="888.5" cy="374.6" r="2.75" fill-opacity="0.71"/>
<circle cx="893.8" cy="374.7" r="2.75" fill-opacity="0.72"/>
<circle cx="899.1" cy="378.1" r="2.75" fill-opacity="0.73"/>
<circle cx="904.3" cy="388.0" r="2.75" fill-opacity="0.72"/>
<circle cx="909.4" cy="405.3" r="2.75" fill-opacity="0.70"/>
<circle cx="914.4" cy="423.5" r="2.75" fill-opacity="0.68"/>
<circle cx="924.5" cy="453.4" r="2.75" fill-opacity="0.65"/>
<circle cx="934.8" cy="469.9" r="2.75" fill-opacity="0.65"/>
<circle cx="945.6" cy="460.3" r="2.75" fill-opacity="0.68"/>
<circle cx="799.8" cy="375.8" r="2.75" fill-opacity="0.53"/>
<circle cx="809.6" cy="369.0" r="2.75" fill-opacity="0.56"/>
<circle cx="814.5" cy="366.4" r="2.75" fill-opacity="0.57"/>
<circle cx="819.6" cy="368.5" r="2.75" fill-opacity="0.58"/>
<circle cx="824.7" cy="375.7" r="2.75" fill-opacity="0.57"/>
<circle cx="829.8" cy="387.3" r="2.75" fill-opacity="0.57"/>
<circle cx="835.0" cy="398.2" r="2.75" fill-opacity="0.56"/>
<circle cx="840.1" cy="407.2" r="2.75" fill-opacity="0.55"/>
<circle cx="845.1" cy="414.1" r="2.75" fill-opacity="0.55"/>
<circle cx="850.2" cy="421.5" r="2.75" fill-opacity="0.55"/>
<circle cx="855.3" cy="424.1" r="2.75" fill-opacity="0.55"/>
<circle cx="865.4" cy="422.6" r="2.75" fill-opacity="0.57"/>
<circle cx="870.5" cy="413.6" r="2.75" fill-opacity="0.60"/>
<circle cx="875.7" cy="408.6" r="2.75" fill-opacity="0.61"/>
<circle cx="886.1" cy="392.2" r="2.75" fill-opacity="0.66"/>
<circle cx="891.3" cy="390.4" r="2.75" fill-opacity="0.67"/>
<circle cx="896.6" cy="394.6" r="2.75" fill-opacity="0.67"/>
<circle cx="901.8" cy="393.6" r="2.75" fill-opacity="0.69"/>
<circle cx="907.0" cy="401.2" r="2.75" fill-opacity="0.68"/>
<circle cx="912.2" cy="410.2" r="2.75" fill-opacity="0.68"/>
<circle cx="922.4" cy="430.0" r="2.75" fill-opacity="0.67"/>
<circle cx="927.6" cy="437.2" r="2.75" fill-opacity="0.66"/>
<circle cx="932.8" cy="444.0" r="2.75" fill-opacity="0.66"/>
<circle cx="943.4" cy="446.3" r="2.75" fill-opacity="0.68"/>
<circle cx="948.8" cy="444.9" r="2.75" fill-opacity="0.69"/>
<circle cx="954.2" cy="441.8" r="2.75" fill-opacity="0.70"/>
<circle cx="959.9" cy="432.4" r="2.75" fill-opacity="0.73"/>
<circle cx="798.2" cy="383.4" r="2.75" fill-opacity="0.49"/>
<circle cx="803.1" cy="384.5" r="2.75" fill-opacity="0.50"/>
<circle cx="807.9" cy="380.9" r="2.75" fill-opacity="0.51"/>
<circle cx="817.9" cy="386.5" r="2.75" fill-opacity="0.52"/>
<circle cx="822.9" cy="390.5" r="2.75" fill-opacity="0.53"/>
<circle cx="827.9" cy="388.7" r="2.75" fill-opacity="0.54"/>
<circle cx="832.9" cy="392.4" r="2.75" fill-opacity="0.54"/>
<circle cx="838.0" cy="395.4" r="2.75" fill-opacity="0.55"/>
<circle cx="843.0" cy="393.0" r="2.75" fill-opacity="0.56"/>
<circle cx="848.0" cy="396.9" r="2.75" fill-opacity="0.56"/>
<circle cx="858.2" cy="398.9" r="2.75" fill-opacity="0.58"/>
<circle cx="863.2" cy="397.1" r="2.75" fill-opacity="0.59"/>
<circle cx="873.5" cy="405.0" r="2.75" fill-opacity="0.60"/>
<circle cx="878.6" cy="403.4" r="2.75" fill-opacity="0.61"/>
<circle cx="883.8" cy="406.9" r="2.75" fill-opacity="0.61"/>
<circle cx="894.1" cy="411.0" r="2.75" fill-opacity="0.62"/>
<circle cx="899.3" cy="411.2" r="2.75" fill-opacity="0.63"/>
<circle cx="904.5" cy="412.0" r="2.75" fill-opacity="0.64"/>
<circle cx="909.7" cy="413.5" r="2.75" fill-opacity="0.65"/>
<circle cx="925.4" cy="420.6" r="2.75" fill-opacity="0.66"/>
<circle cx="936.1" cy="420.0" r="2.75" fill-opacity="0.68"/>
<circle cx="946.6" cy="425.6" r="2.75" fill-opacity="0.69"/>
<circle cx="952.0" cy="425.4" r="2.75" fill-opacity="0.70"/>
<circle cx="957.4" cy="427.0" r="2.75" fill-opacity="0.71"/>
<circle cx="962.7" cy="429.7" r="2.75" fill-opacity="0.72"/>
<circle cx="806.3" cy="388.8" r="2.75" fill-opacity="0.48"/>
<circle cx="811.3" cy="399.5" r="2.75" fill-opacity="0.47"/>
<circle cx="821.3" cy="409.2" r="2.75" fill-opacity="0.47"/>
<circle cx="826.2" cy="409.6" r="2.75" fill-opacity="0.48"/>
<circle cx="831.1" cy="406.8" r="2.75" fill-opacity="0.50"/>
<circle cx="836.0" cy="399.2" r="2.75" fill-opacity="0.52"/>
<circle cx="841.0" cy="394.2" r="2.75" fill-opacity="0.53"/>
<circle cx="850.9" cy="378.0" r="2.75" fill-opacity="0.58"/>
<circle cx="856.0" cy="374.7" r="2.75" fill-opacity="0.59"/>
<circle cx="861.1" cy="371.0" r="2.75" fill-opacity="0.60"/>
<circle cx="866.2" cy="378.5" r="2.75" fill-opacity="0.60"/>
<circle cx="871.3" cy="381.4" r="2.75" fill-opacity="0.61"/>
<circle cx="876.4" cy="391.6" r="2.75" fill-opacity="0.60"/>
<circle cx="881.5" cy="402.0" r="2.75" fill-opacity="0.59"/>
<circle cx="886.6" cy="413.6" r="2.75" fill-opacity="0.58"/>
<circle cx="891.7" cy="422.8" r="2.75" fill-opacity="0.58"/>
<circle cx="896.8" cy="428.5" r="2.75" fill-opacity="0.58"/>
<circle cx="907.1" cy="431.1" r="2.75" fill-opacity="0.59"/>
<circle cx="912.4" cy="426.7" r="2.75" fill-opacity="0.61"/>
<circle cx="923.0" cy="415.0" r="2.75" fill-opacity="0.65"/>
<circle cx="928.5" cy="404.4" r="2.75" fill-opacity="0.67"/>
<circle cx="934.0" cy="398.1" r="2.75" fill-opacity="0.69"/>
<circle cx="939.3" cy="400.8" r="2.75" fill-opacity="0.70"/>
<circle cx="944.7" cy="396.5" r="2.75" fill-opacity="0.71"/>
<circle cx="950.0" cy="400.2" r="2.75" fill-opacity="0.72"/>
<circle cx="960.4" cy="417.3" r="2.75" fill-opacity="0.71"/>
<circle cx="965.4" cy="430.3" r="2.75" fill-opacity="0.70"/>
<circle cx="804.3" cy="379.8" r="2.75" fill-opacity="0.47"/>
<circle cx="809.4" cy="394.8" r="2.75" fill-opacity="0.45"/>
<circle cx="819.6" cy="418.7" r="2.75" fill-opacity="0.44"/>
<circle cx="824.5" cy="423.6" r="2.75" fill-opacity="0.44"/>
<circle cx="829.4" cy="421.8" r="2.75" fill-opacity="0.45"/>
<circle cx="834.2" cy="415.4" r="2.75" fill-opacity="0.47"/>
<circle cx="839.0" cy="401.5" r="2.75" fill-opacity="0.50"/>
<circle cx="843.9" cy="387.7" r="2.75" fill-opacity="0.53"/>
<circle cx="848.8" cy="371.9" r="2.75" fill-opacity="0.56"/>
<circle cx="853.8" cy="361.3" r="2.75" fill-opacity="0.59"/>
<circle cx="884.4" cy="400.9" r="2.75" fill-opacity="0.58"/>
<circle cx="889.4" cy="419.8" r="2.75" fill-opacity="0.56"/>
<circle cx="894.5" cy="430.3" r="2.75" fill-opacity="0.55"/>
<circle cx="899.5" cy="444.0" r="2.75" fill-opacity="0.54"/>
<circle cx="904.5" cy="449.3" r="2.75" fill-opacity="0.54"/>
<circle cx="909.7" cy="449.3" r="2.75" fill-opacity="0.55"/>
<circle cx="915.0" cy="437.7" r="2.75" fill-opacity="0.58"/>
<circle cx="920.3" cy="428.5" r="2.75" fill-opacity="0.60"/>
<circle cx="931.5" cy="396.5" r="2.75" fill-opacity="0.67"/>
<circle cx="937.1" cy="383.5" r="2.75" fill-opacity="0.70"/>
<circle cx="942.7" cy="373.7" r="2.75" fill-opacity="0.72"/>
<circle cx="948.0" cy="375.1" r="2.75" fill-opacity="0.73"/>
<circle cx="958.4" cy="392.9" r="2.75" fill-opacity="0.72"/>
<circle cx="963.5" cy="404.2" r="2.75" fill-opacity="0.71"/>
<circle cx="968.3" cy="423.2" r="2.75" fill-opacity="0.69"/>
<circle cx="807.3" cy="375.7" r="2.75" fill-opacity="0.46"/>
<circle cx="827.6" cy="434.3" r="2.75" fill-opacity="0.41"/>
<circle cx="846.8" cy="383.2" r="2.75" fill-opacity="0.52"/>
<circle cx="851.8" cy="366.1" r="2.75" fill-opacity="0.55"/>
<circle cx="856.8" cy="350.4" r="2.75" fill-opacity="0.59"/>
<circle cx="867.0" cy="335.6" r="2.75" fill-opacity="0.63"/>
<circle cx="872.1" cy="340.3" r="2.75" fill-opacity="0.63"/>
<circle cx="877.3" cy="354.3" r="2.75" fill-opacity="0.62"/>
<circle cx="882.3" cy="374.1" r="2.75" fill-opacity="0.60"/>
<circle cx="887.3" cy="396.9" r="2.75" fill-opacity="0.57"/>
<circle cx="892.3" cy="421.6" r="2.75" fill-opacity="0.54"/>
<circle cx="897.2" cy="438.2" r="2.75" fill-opacity="0.52"/>
<circle cx="902.2" cy="450.7" r="2.75" fill-opacity="0.51"/>
<circle cx="912.4" cy="454.3" r="2.75" fill-opacity="0.53"/>
<circle cx="917.7" cy="445.1" r="2.75" fill-opacity="0.55"/>
<circle cx="923.1" cy="428.9" r="2.75" fill-opacity="0.58"/>
<circle cx="928.7" cy="408.8" r="2.75" fill-opacity="0.62"/>
<circle cx="940.1" cy="371.9" r="2.75" fill-opacity="0.70"/>
<circle cx="956.4" cy="366.4" r="2.75" fill-opacity="0.74"/>
<circle cx="961.5" cy="378.0" r="2.75" fill-opacity="0.73"/>
<circle cx="966.4" cy="395.9" r="2.75" fill-opacity="0.71"/>
<circle cx="971.0" cy="421.5" r="2.75" fill-opacity="0.68"/>
<circle cx="815.5" cy="397.0" r="2.75" fill-opacity="0.42"/>
<circle cx="820.7" cy="415.5" r="2.75" fill-opacity="0.40"/>
<circle cx="830.6" cy="435.9" r="2.75" fill-opacity="0.39"/>
<circle cx="835.4" cy="434.2" r="2.75" fill-opacity="0.40"/>
<circle cx="845.0" cy="404.4" r="2.75" fill-opacity="0.46"/>
<circle cx="859.7" cy="341.0" r="2.75" fill-opacity="0.59"/>
<circle cx="864.8" cy="328.9" r="2.75" fill-opacity="0.61"/>
<circle cx="870.0" cy="328.1" r="2.75" fill-opacity="0.62"/>
<circle cx="875.1" cy="334.7" r="2.75" fill-opacity="0.62"/>
<circle cx="890.2" cy="393.1" r="2.75" fill-opacity="0.56"/>
<circle cx="895.1" cy="418.4" r="2.75" fill-opacity="0.53"/>
<circle cx="905.0" cy="452.9" r="2.75" fill-opacity="0.49"/>
<circle cx="925.9" cy="428.0" r="2.75" fill-opacity="0.57"/>
<circle cx="931.5" cy="408.4" r="2.75" fill-opacity="0.61"/>
<circle cx="937.2" cy="386.9" r="2.75" fill-opacity="0.65"/>
<circle cx="943.0" cy="366.2" r="2.75" fill-opacity="0.69"/>
<circle cx="948.7" cy="355.7" r="2.75" fill-opacity="0.72"/>
<circle cx="954.2" cy="349.4" r="2.75" fill-opacity="0.74"/>
<circle cx="959.5" cy="355.4" r="2.75" fill-opacity="0.74"/>
<circle cx="969.3" cy="391.1" r="2.75" fill-opacity="0.70"/>
<circle cx="818.4" cy="391.9" r="2.75" fill-opacity="0.41"/>
<circle cx="823.5" cy="408.0" r="2.75" fill-opacity="0.40"/>
<circle cx="828.5" cy="421.9" r="2.75" fill-opacity="0.39"/>
<circle cx="833.4" cy="428.6" r="2.75" fill-opacity="0.38"/>
<circle cx="838.3" cy="425.5" r="2.75" fill-opacity="0.40"/>
<circle cx="843.1" cy="417.3" r="2.75" fill-opacity="0.42"/>
<circle cx="847.9" cy="405.1" r="2.75" fill-opacity="0.45"/>
<circle cx="852.7" cy="379.5" r="2.75" fill-opacity="0.49"/>
<circle cx="857.7" cy="360.5" r="2.75" fill-opacity="0.53"/>
<circle cx="862.7" cy="341.9" r="2.75" fill-opacity="0.57"/>
<circle cx="867.8" cy="332.9" r="2.75" fill-opacity="0.59"/>
<circle cx="872.9" cy="330.9" r="2.75" fill-opacity="0.60"/>
<circle cx="878.0" cy="337.1" r="2.75" fill-opacity="0.60"/>
<circle cx="883.1" cy="351.0" r="2.75" fill-opacity="0.59"/>
<circle cx="902.9" cy="433.6" r="2.75" fill-opacity="0.50"/>
<circle cx="907.8" cy="449.6" r="2.75" fill-opacity="0.48"/>
<circle cx="917.9" cy="451.6" r="2.75" fill-opacity="0.50"/>
<circle cx="923.3" cy="438.6" r="2.75" fill-opacity="0.53"/>
<circle cx="928.7" cy="426.6" r="2.75" fill-opacity="0.56"/>
<circle cx="934.3" cy="406.3" r="2.75" fill-opacity="0.60"/>
<circle cx="940.0" cy="384.8" r="2.75" fill-opacity="0.64"/>
<circle cx="945.7" cy="367.6" r="2.75" fill-opacity="0.68"/>
<circle cx="951.4" cy="355.8" r="2.75" fill-opacity="0.70"/>
<circle cx="956.9" cy="351.6" r="2.75" fill-opacity="0.72"/>
<circle cx="962.1" cy="358.3" r="2.75" fill-opacity="0.72"/>
<circle cx="967.2" cy="371.8" r="2.75" fill-opacity="0.71"/>
<circle cx="976.5" cy="416.6" r="2.75" fill-opacity="0.65"/>
<circle cx="816.2" cy="367.6" r="2.75" fill-opacity="0.43"/>
<circle cx="821.3" cy="385.9" r="2.75" fill-opacity="0.41"/>
<circle cx="826.4" cy="399.7" r="2.75" fill-opacity="0.40"/>
<circle cx="831.3" cy="409.0" r="2.75" fill-opacity="0.39"/>
<circle cx="841.1" cy="411.9" r="2.75" fill-opacity="0.40"/>
<circle cx="845.9" cy="407.9" r="2.75" fill-opacity="0.42"/>
<circle cx="850.8" cy="394.9" r="2.75" fill-opacity="0.45"/>
<circle cx="860.6" cy="360.9" r="2.75" fill-opacity="0.52"/>
<circle cx="865.6" cy="354.6" r="2.75" fill-opacity="0.53"/>
<circle cx="870.7" cy="343.5" r="2.75" fill-opacity="0.56"/>
<circle cx="875.8" cy="343.4" r="2.75" fill-opacity="0.57"/>
<circle cx="880.9" cy="346.6" r="2.75" fill-opacity="0.57"/>
<circle cx="891.0" cy="373.1" r="2.75" fill-opacity="0.55"/>
<circle cx="895.9" cy="389.8" r="2.75" fill-opacity="0.53"/>
<circle cx="900.8" cy="409.1" r="2.75" fill-opacity="0.51"/>
<circle cx="905.8" cy="420.8" r="2.75" fill-opacity="0.50"/>
<circle cx="910.8" cy="429.6" r="2.75" fill-opacity="0.50"/>
<circle cx="915.7" cy="441.0" r="2.75" fill-opacity="0.49"/>
<circle cx="920.9" cy="437.0" r="2.75" fill-opacity="0.51"/>
<circle cx="931.5" cy="418.4" r="2.75" fill-opacity="0.55"/>
<circle cx="937.1" cy="401.2" r="2.75" fill-opacity="0.59"/>
<circle cx="953.9" cy="363.7" r="2.75" fill-opacity="0.67"/>
<circle cx="959.4" cy="361.8" r="2.75" fill-opacity="0.69"/>
<circle cx="964.6" cy="366.7" r="2.75" fill-opacity="0.69"/>
<circle cx="969.6" cy="379.3" r="2.75" fill-opacity="0.68"/>
<circle cx="974.4" cy="396.1" r="2.75" fill-opacity="0.66"/>
<circle cx="979.3" cy="411.4" r="2.75" fill-opacity="0.65"/>
<circle cx="819.2" cy="366.2" r="2.75" fill-opacity="0.42"/>
<circle cx="829.2" cy="385.0" r="2.75" fill-opacity="0.40"/>
<circle cx="834.1" cy="390.0" r="2.75" fill-opacity="0.41"/>
<circle cx="839.0" cy="394.9" r="2.75" fill-opacity="0.41"/>
<circle cx="843.8" cy="393.1" r="2.75" fill-opacity="0.42"/>
<circle cx="848.7" cy="390.8" r="2.75" fill-opacity="0.43"/>
<circle cx="878.6" cy="358.8" r="2.75" fill-opacity="0.53"/>
<circle cx="893.8" cy="375.8" r="2.75" fill-opacity="0.53"/>
<circle cx="898.8" cy="388.3" r="2.75" fill-opacity="0.52"/>
<circle cx="908.8" cy="405.7" r="2.75" fill-opacity="0.51"/>
<circle cx="913.8" cy="411.3" r="2.75" fill-opacity="0.51"/>
<circle cx="918.8" cy="417.0" r="2.75" fill-opacity="0.51"/>
<circle cx="929.2" cy="412.2" r="2.75" fill-opacity="0.54"/>
<circle cx="934.5" cy="406.7" r="2.75" fill-opacity="0.55"/>
<circle cx="945.4" cy="388.8" r="2.75" fill-opacity="0.60"/>
<circle cx="950.7" cy="386.2" r="2.75" fill-opacity="0.61"/>
<circle cx="956.1" cy="381.6" r="2.75" fill-opacity="0.63"/>
<circle cx="971.8" cy="393.4" r="2.75" fill-opacity="0.64"/>
<circle cx="976.9" cy="401.7" r="2.75" fill-opacity="0.64"/>
<circle cx="827.0" cy="363.4" r="2.75" fill-opacity="0.41"/>
<circle cx="831.9" cy="366.1" r="2.75" fill-opacity="0.42"/>
<circle cx="841.7" cy="367.3" r="2.75" fill-opacity="0.43"/>
<circle cx="846.6" cy="369.6" r="2.75" fill-opacity="0.44"/>
<circle cx="851.5" cy="367.2" r="2.75" fill-opacity="0.45"/>
<circle cx="861.4" cy="374.2" r="2.75" fill-opacity="0.46"/>
<circle cx="866.4" cy="373.8" r="2.75" fill-opacity="0.47"/>
<circle cx="871.4" cy="377.7" r="2.75" fill-opacity="0.47"/>
<circle cx="876.4" cy="378.6" r="2.75" fill-opacity="0.48"/>
<circle cx="881.4" cy="381.7" r="2.75" fill-opacity="0.48"/>
<circle cx="886.5" cy="376.9" r="2.75" fill-opacity="0.50"/>
<circle cx="896.5" cy="386.7" r="2.75" fill-opacity="0.50"/>
<circle cx="906.7" cy="386.2" r="2.75" fill-opacity="0.52"/>
<circle cx="911.8" cy="388.5" r="2.75" fill-opacity="0.52"/>
<circle cx="916.9" cy="388.0" r="2.75" fill-opacity="0.53"/>
<circle cx="922.0" cy="391.5" r="2.75" fill-opacity="0.54"/>
<circle cx="947.9" cy="395.0" r="2.75" fill-opacity="0.58"/>
<circle cx="953.1" cy="397.5" r="2.75" fill-opacity="0.58"/>
<circle cx="958.3" cy="399.9" r="2.75" fill-opacity="0.59"/>
<circle cx="963.5" cy="401.4" r="2.75" fill-opacity="0.59"/>
<circle cx="968.8" cy="402.0" r="2.75" fill-opacity="0.60"/>
<circle cx="974.1" cy="404.4" r="2.75" fill-opacity="0.61"/>
<circle cx="979.4" cy="404.1" r="2.75" fill-opacity="0.62"/>
<circle cx="829.8" cy="352.0" r="2.75" fill-opacity="0.42"/>
<circle cx="834.7" cy="347.4" r="2.75" fill-opacity="0.43"/>
<circle cx="839.5" cy="343.0" r="2.75" fill-opacity="0.45"/>
<circle cx="844.4" cy="343.0" r="2.75" fill-opacity="0.45"/>
<circle cx="854.4" cy="350.9" r="2.75" fill-opacity="0.46"/>
<circle cx="859.4" cy="361.7" r="2.75" fill-opacity="0.45"/>
<circle cx="864.3" cy="371.2" r="2.75" fill-opacity="0.45"/>
<circle cx="869.3" cy="383.2" r="2.75" fill-opacity="0.44"/>
<circle cx="879.2" cy="395.3" r="2.75" fill-opacity="0.44"/>
<circle cx="884.1" cy="399.0" r="2.75" fill-opacity="0.44"/>
<circle cx="899.3" cy="390.7" r="2.75" fill-opacity="0.48"/>
<circle cx="904.4" cy="379.9" r="2.75" fill-opacity="0.50"/>
<circle cx="909.6" cy="375.1" r="2.75" fill-opacity="0.52"/>
<circle cx="925.2" cy="366.8" r="2.75" fill-opacity="0.56"/>
<circle cx="930.4" cy="366.5" r="2.75" fill-opacity="0.57"/>
<circle cx="935.4" cy="374.9" r="2.75" fill-opacity="0.56"/>
<circle cx="940.3" cy="388.2" r="2.75" fill-opacity="0.55"/>
<circle cx="945.4" cy="393.3" r="2.75" fill-opacity="0.55"/>
<circle cx="955.3" cy="412.8" r="2.75" fill-opacity="0.54"/>
<circle cx="960.4" cy="419.1" r="2.75" fill-opacity="0.54"/>
<circle cx="970.8" cy="422.4" r="2.75" fill-opacity="0.55"/>
<circle cx="987.2" cy="406.6" r="2.75" fill-opacity="0.61"/>
<circle cx="828.0" cy="358.0" r="2.75" fill-opacity="0.38"/>
<circle cx="832.7" cy="346.1" r="2.75" fill-opacity="0.41"/>
<circle cx="837.5" cy="331.6" r="2.75" fill-opacity="0.44"/>
<circle cx="842.3" cy="322.2" r="2.75" fill-opacity="0.46"/>
<circle cx="847.2" cy="320.0" r="2.75" fill-opacity="0.47"/>
<circle cx="857.2" cy="337.4" r="2.75" fill-opacity="0.46"/>
<circle cx="862.2" cy="348.7" r="2.75" fill-opacity="0.46"/>
<circle cx="872.1" cy="385.8" r="2.75" fill-opacity="0.42"/>
<circle cx="881.9" cy="411.9" r="2.75" fill-opacity="0.40"/>
<circle cx="886.8" cy="415.5" r="2.75" fill-opacity="0.40"/>
<circle cx="891.8" cy="415.0" r="2.75" fill-opacity="0.41"/>
<circle cx="896.9" cy="405.3" r="2.75" fill-opacity="0.43"/>
<circle cx="902.0" cy="396.0" r="2.75" fill-opacity="0.45"/>
<circle cx="907.2" cy="381.1" r="2.75" fill-opacity="0.49"/>
<circle cx="912.5" cy="367.0" r="2.75" fill-opacity="0.52"/>
<circle cx="917.8" cy="354.1" r="2.75" fill-opacity="0.54"/>
<circle cx="923.1" cy="345.3" r="2.75" fill-opacity="0.57"/>
<circle cx="928.4" cy="340.1" r="2.75" fill-opacity="0.58"/>
<circle cx="933.5" cy="347.3" r="2.75" fill-opacity="0.58"/>
<circle cx="943.4" cy="371.9" r="2.75" fill-opacity="0.56"/>
<circle cx="948.1" cy="391.2" r="2.75" fill-opacity="0.54"/>
<circle cx="952.9" cy="407.4" r="2.75" fill-opacity="0.52"/>
<circle cx="962.5" cy="435.8" r="2.75" fill-opacity="0.50"/>
<circle cx="972.8" cy="438.9" r="2.75" fill-opacity="0.51"/>
<circle cx="978.5" cy="427.0" r="2.75" fill-opacity="0.54"/>
<circle cx="984.1" cy="417.0" r="2.75" fill-opacity="0.56"/>
<circle cx="830.9" cy="358.2" r="2.75" fill-opacity="0.37"/>
<circle cx="840.3" cy="319.0" r="2.75" fill-opacity="0.44"/>
<circle cx="845.2" cy="309.5" r="2.75" fill-opacity="0.47"/>
<circle cx="850.1" cy="306.6" r="2.75" fill-opacity="0.48"/>
<circle cx="860.1" cy="323.9" r="2.75" fill-opacity="0.47"/>
<circle cx="865.1" cy="346.2" r="2.75" fill-opacity="0.45"/>
<circle cx="870.0" cy="364.8" r="2.75" fill-opacity="0.43"/>
<circle cx="874.9" cy="388.3" r="2.75" fill-opacity="0.40"/>
<circle cx="879.8" cy="408.1" r="2.75" fill-opacity="0.38"/>
<circle cx="884.6" cy="422.2" r="2.75" fill-opacity="0.37"/>
<circle cx="894.5" cy="420.6" r="2.75" fill-opacity="0.39"/>
<circle cx="899.5" cy="413.6" r="2.75" fill-opacity="0.40"/>
<circle cx="910.0" cy="379.7" r="2.75" fill-opacity="0.47"/>
<circle cx="915.4" cy="358.2" r="2.75" fill-opacity="0.51"/>
<circle cx="920.8" cy="340.5" r="2.75" fill-opacity="0.55"/>
<circle cx="931.4" cy="326.4" r="2.75" fill-opacity="0.59"/>
<circle cx="936.6" cy="330.8" r="2.75" fill-opacity="0.59"/>
<circle cx="941.5" cy="345.8" r="2.75" fill-opacity="0.58"/>
<circle cx="946.2" cy="366.3" r="2.75" fill-opacity="0.55"/>
<circle cx="950.9" cy="385.5" r="2.75" fill-opacity="0.53"/>
<circle cx="955.5" cy="408.3" r="2.75" fill-opacity="0.51"/>
<circle cx="969.8" cy="450.6" r="2.75" fill-opacity="0.47"/>
<circle cx="975.2" cy="445.0" r="2.75" fill-opacity="0.49"/>
<circle cx="980.7" cy="437.1" r="2.75" fill-opacity="0.51"/>
<circle cx="986.6" cy="417.8" r="2.75" fill-opacity="0.55"/>
<circle cx="992.6" cy="401.8" r="2.75" fill-opacity="0.58"/>
<circle cx="833.8" cy="353.2" r="2.75" fill-opacity="0.36"/>
<circle cx="843.2" cy="312.1" r="2.75" fill-opacity="0.44"/>
<circle cx="848.0" cy="302.2" r="2.75" fill-opacity="0.46"/>
<circle cx="853.0" cy="297.7" r="2.75" fill-opacity="0.48"/>
<circle cx="863.0" cy="320.7" r="2.75" fill-opacity="0.46"/>
<circle cx="868.0" cy="342.2" r="2.75" fill-opacity="0.44"/>
<circle cx="872.9" cy="366.0" r="2.75" fill-opacity="0.41"/>
<circle cx="887.4" cy="421.0" r="2.75" fill-opacity="0.35"/>
<circle cx="897.2" cy="425.6" r="2.75" fill-opacity="0.36"/>
<circle cx="902.3" cy="411.6" r="2.75" fill-opacity="0.39"/>
<circle cx="907.5" cy="396.8" r="2.75" fill-opacity="0.42"/>
<circle cx="912.8" cy="373.2" r="2.75" fill-opacity="0.47"/>
<circle cx="918.2" cy="353.3" r="2.75" fill-opacity="0.51"/>
<circle cx="923.6" cy="337.2" r="2.75" fill-opacity="0.54"/>
<circle cx="929.0" cy="323.6" r="2.75" fill-opacity="0.57"/>
<circle cx="934.3" cy="319.6" r="2.75" fill-opacity="0.58"/>
<circle cx="939.4" cy="325.6" r="2.75" fill-opacity="0.58"/>
<circle cx="944.3" cy="341.2" r="2.75" fill-opacity="0.57"/>
<circle cx="958.1" cy="408.8" r="2.75" fill-opacity="0.49"/>
<circle cx="962.7" cy="429.5" r="2.75" fill-opacity="0.47"/>
<circle cx="972.4" cy="449.4" r="2.75" fill-opacity="0.46"/>
<circle cx="977.6" cy="449.0" r="2.75" fill-opacity="0.47"/>
<circle cx="983.1" cy="439.9" r="2.75" fill-opacity="0.49"/>
<circle cx="989.1" cy="418.3" r="2.75" fill-opacity="0.53"/>
</g>
<rect x="936" y="256.5" width="92" height="32.5" rx="2" fill="#fff" fill-opacity="0.8" stroke="#d5d5d5" stroke-width="1"/>
<circle cx="949.8" cy="265.6" r="2.6" fill="#ff0000"/><circle cx="949.8" cy="280.4" r="2.6" fill="#0000ff"/>
<text x="968.5" y="267.8" font-size="10.5" letter-spacing="0.35">predictions</text><text x="968.5" y="282.6" font-size="10.5" letter-spacing="0.35">targets</text></g></svg>
<!-- bottom tabs -->
<svg class="a" style="left:0;top:612px" width="1331" height="40" viewBox="0 612 1331 40">
 <path d="M62.5 642 V620.5 H192.8 L205.5 641.5" fill="#f5f5f5" stroke="#d4d4d4" stroke-width="1"/>
 <path d="M207.5 642 V620.5 H309.4 L322 641.5" fill="#f5f5f5" stroke="#d4d4d4" stroke-width="1"/>
 <path d="M10.5 642 V620 H48 L61.3 641.8 H400.5" fill="#f7f7f7" stroke="#d0d0d0" stroke-width="1"/>
 <rect x="11" y="618.8" width="37.5" height="2" fill="#117aa6"/>
 <rect x="9" y="612" width="1.2" height="30" fill="#c8c8c8"/>
</svg>
<div class="t" style="left:15.5px;top:625px;letter-spacing:-0.1px">I/O/S</div>
<div class="t" style="left:68.5px;top:625.5px;letter-spacing:0.2px">Training Parameters</div>
<div class="t" style="left:212.5px;top:625.5px;letter-spacing:0.05px">Net Architecture</div>
<!-- IOS pane -->
<div class="vl" style="left:400px;top:642px;height:131px;background:#c8c8c8"></div>
<div class="t" style="left:11.5px;top:644.5px">Inputs</div>
<div class="t" style="left:108px;top:644.5px;letter-spacing:0.2px">Outputs</div>
<div class="t" style="left:206px;top:644.5px;letter-spacing:0.2px">States</div>
<div class="t" style="left:304px;top:644.5px;letter-spacing:0.15px">Derivatives</div>
<div class="lb" style="left:11px;top:667px;width:97px;height:106.5px;border-width:1px 1px 1.5px 1px;border-color:#b4b4b4"></div>
<div class="lb" style="left:107px;top:667px;width:97.5px;height:106.5px;border-width:1px 1.5px 1.5px 1.5px;border-color:#b4b4b4"></div>
<div class="lb" style="left:206px;top:667px;width:97px;height:106.5px;border-width:1px 1.5px 1.5px 1px;border-color:#b4b4b4"></div>
<div class="lb" style="left:303px;top:667px;width:98px;height:106.5px;border-width:1px 1.5px 1.5px 1px;border-color:#b4b4b4"></div>
<div class="a" style="left:204px;top:667px;width:2px;height:106px;background:#dcdcdc"></div>
<div class="t" style="left:15px;top:671px">x</div>
<div class="t" style="left:15px;top:686px">y</div>
<div class="t" style="left:111.5px;top:671px">z</div>
<!-- loss metrics -->
<div class="radio" style="left:407px;top:623.5px"></div>
<div class="t" style="left:426px;top:623.5px;letter-spacing:0.1px">Loss Metrics</div>
<div class="lb" style="left:407px;top:643px;width:147px;height:130.5px;border-color:#bdbdbd"></div>
<div class="a" style="left:408px;top:644px;width:145px;height:16px;background:#d8f0fa"></div>
<div class="t" style="left:411.5px;top:645.5px;color:#444">overall loss</div>
<div class="t" style="left:411px;top:661.5px;color:#444">z_loss</div>
<!-- accuracy -->
<div class="radio" style="left:564px;top:623.5px"></div>
<div class="t" style="left:583px;top:623.5px;letter-spacing:0.25px">Accuracy check</div>
<div class="lb" style="left:564px;top:643px;width:157.5px;height:130px;border-color:#bdbdbd"></div>
<div class="t" style="left:568.5px;top:645.5px;color:#444">output:z</div>
<!-- hyper planes -->
<div class="radio on" style="left:735.5px;top:623.5px"></div>
<div class="t" style="left:755px;top:623.5px;letter-spacing:0.25px">Hyper Planes</div>
<div class="t" style="left:736px;top:644px">1st input/state</div>
<div class="t" style="left:735.5px;top:669px">2nd input/state</div>
<div class="t" style="left:735.5px;top:693px;letter-spacing:0.2px">Outputs</div>
<div class="cb" style="left:827px;top:643px;width:103.5px;height:19px"></div>
<div class="cb" style="left:929.5px;top:643px;width:15.5px;height:19px"></div>
<div class="t" style="left:831px;top:647px">x</div>
<div class="cb" style="left:827px;top:668px;width:103.5px;height:19px"></div>
<div class="cb" style="left:929.5px;top:668px;width:15.5px;height:19px"></div>
<div class="t" style="left:831px;top:671px">y</div>
<div class="cb" style="left:814px;top:692.5px;width:103px;height:18.5px"></div>
<div class="cb" style="left:916px;top:692.5px;width:15.5px;height:18.5px"></div>
<div class="t" style="left:818px;top:696px">z</div>
<svg class="a" style="left:0;top:640px" width="1331" height="80" viewBox="0 640 1331 80">
 <path d="M933.5 651 L937.3 654.8 L941 651 M933.5 676 L937.3 679.8 L941 676 M920 700.3 L923.8 704.1 L927.5 700.3" fill="none" stroke="#777" stroke-width="1.1"/>
</svg>
<!-- checkbox -->
<div class="a" style="left:735.5px;top:745px;width:13px;height:13px;background:#10a5e1;border-radius:1.5px"></div>
<svg class="a" style="left:735.5px;top:745px" width="13" height="13" viewBox="0 0 13 13"><path d="M3 6.8 L5.5 9.2 L10.2 4" fill="none" stroke="#fff" stroke-width="1.7"/></svg>
<div class="a" style="left:752px;top:742px;width:115px;height:20.5px;border:1px dotted #333"></div>
<div class="t" style="left:754.5px;top:746px;letter-spacing:0.25px">Predict on Dataset</div>
<div class="t" style="left:906px;top:741.5px;letter-spacing:0.3px">Downsample Ratio</div>
<div class="cb" style="left:1024px;top:742px;width:51.5px;height:18px"></div>
<div class="t" style="left:1029px;top:745.5px">1</div>
<!-- instance eval -->
<div class="radio" style="left:1168.5px;top:623.5px"></div>
<div class="t" style="left:1188px;top:623.5px;letter-spacing:0.15px">Instance Eval</div>
<div class="lb" style="left:1169px;top:643.5px;width:118px;height:129px;border-color:#b8b8b8"></div>
<div class="lb" style="left:1286px;top:643.5px;width:36.5px;height:129px;border-color:#b8b8b8"></div>
<div class="a" style="left:1287px;top:644.5px;width:34.5px;height:15.5px;background:#d8f0fa"></div>
<div class="t" style="left:1173px;top:645.5px;color:#333">z</div>
<div class="t" style="left:1291px;top:645.5px;color:#444">1</div>
<div class="vl" style="left:1322px;top:612px;height:162px;background:#c8c8c8"></div>
<!-- status -->
<div class="vl" style="left:9px;top:775px;height:21.5px;background:#a0a0a0"></div>
<div class="t" style="left:10.5px;top:780px;color:#7a7a7a;font-size:13.5px;letter-spacing:0.1px">Dataset</div>
<div class="a" style="left:75.5px;top:779px;width:566px;height:18px;background:#f7f7f7;border:1px solid #c2c2c2"></div>
<div class="t" style="left:100px;top:780.5px;width:537px;text-align:right;color:#7a7a7a;letter-spacing:0.23px">C:\Users\sonuman\Desktop\romAI2023_features\auto_explore\surf_data.csv</div>
<div class="t" style="left:656px;top:779.5px;color:#7a7a7a;letter-spacing:0.2px">Parent Folder</div>
<div class="a" style="left:747.5px;top:779px;width:576px;height:17.5px;background:#f7f7f7;border:1px solid #c2c2c2"></div>
<div class="t" style="left:760px;top:780.5px;width:558px;text-align:right;color:#7a7a7a;letter-spacing:0.15px">C:\Users\sonuman\Desktop\romAI2023_features\auto_explore\auto_1</div>
</body></html>
